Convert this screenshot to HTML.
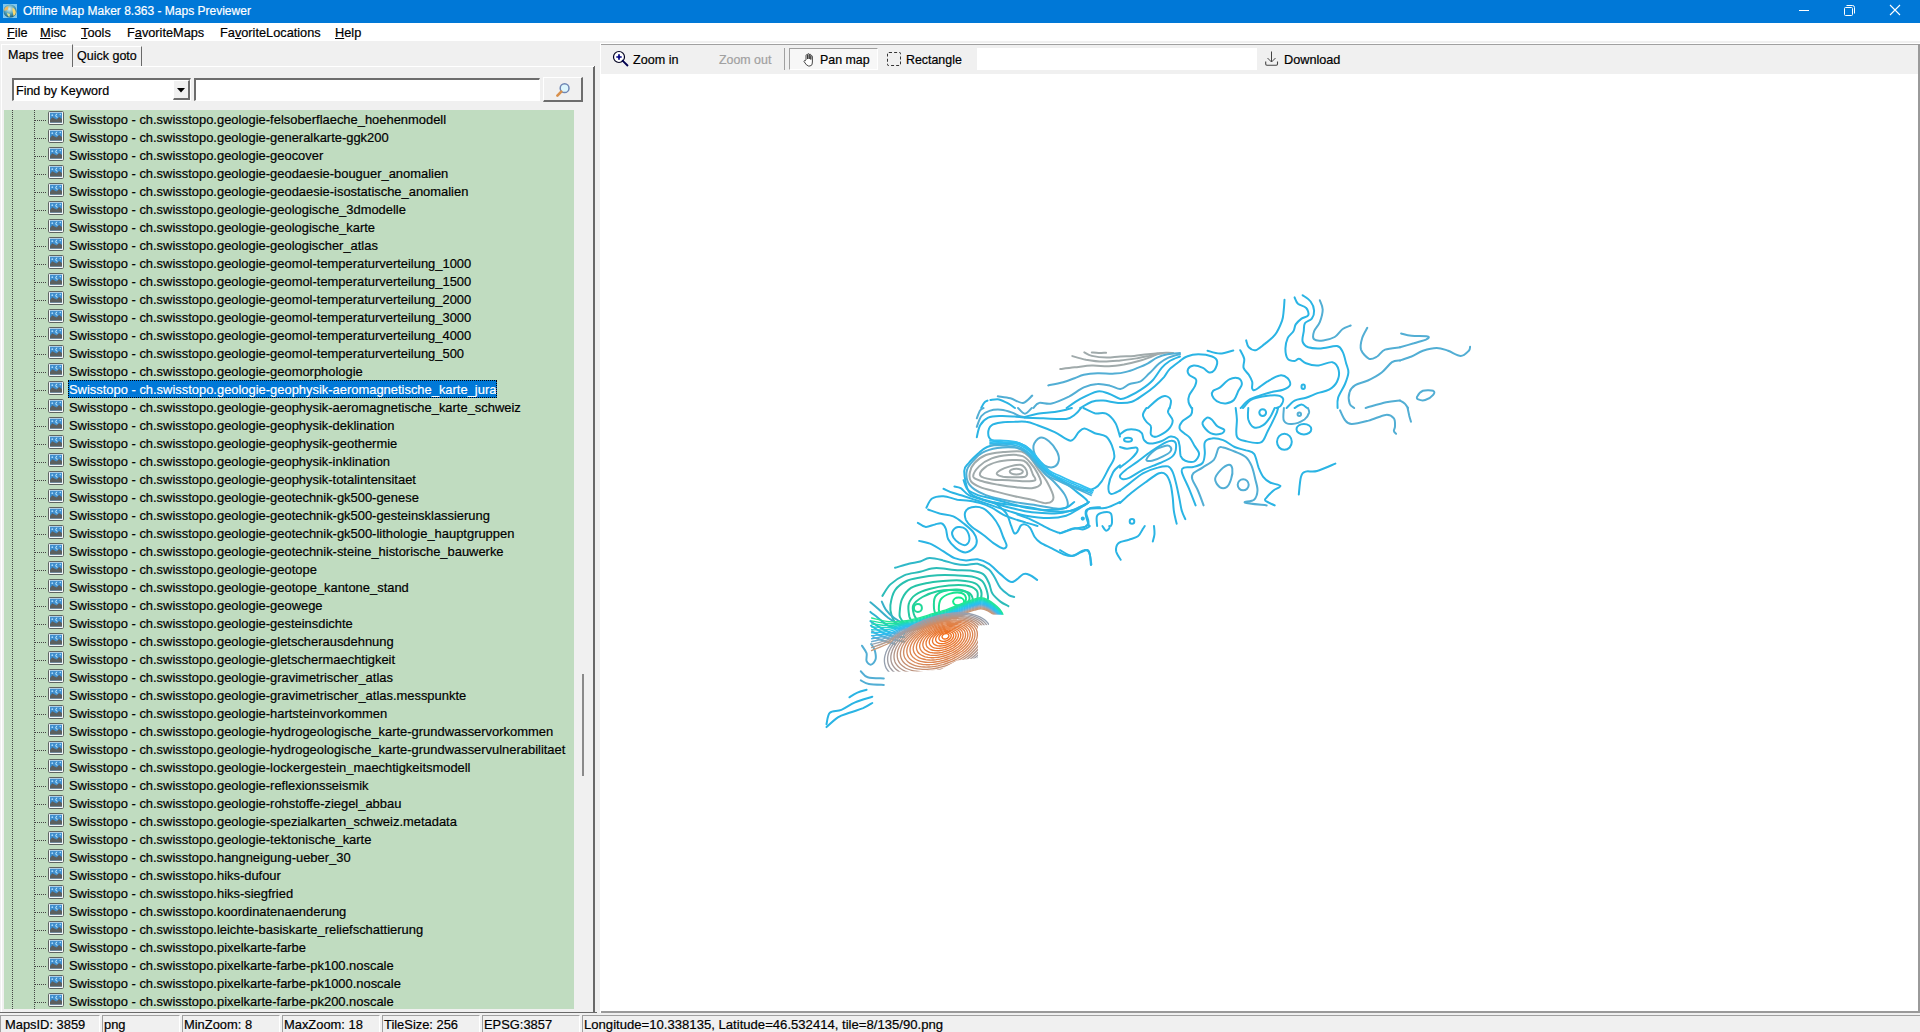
<!DOCTYPE html>
<html><head><meta charset="utf-8">
<style>
*{margin:0;padding:0;box-sizing:border-box}
html,body{width:1920px;height:1032px;overflow:hidden;background:#f0f0f0;font-family:"Liberation Sans",sans-serif;font-size:12px;color:#000;-webkit-text-stroke:0.2px currentColor}
.a{position:absolute}
#title{left:0;top:0;width:1920px;height:23px;background:#0078d7}
#title .t{left:23px;top:4px;color:#fff;font-size:12px;white-space:nowrap}
#menu{left:0;top:23px;width:1920px;height:18px;background:#fff}
#menu span{position:absolute;top:2px;font-size:12.75px;white-space:nowrap}
#menu u{text-decoration:underline;text-underline-offset:1px;text-decoration-thickness:1px}
.row{position:absolute;left:0;height:18px;width:574px}
.row .hd{position:absolute;left:35px;top:9px;width:12px;height:1px;background-image:linear-gradient(90deg,#444 50%,transparent 50%);background-size:2px 1px}
.row .ic{position:absolute;left:48px;top:0px}
.row .tx{position:absolute;left:68px;top:-1px;height:18px;line-height:20px;padding:0 1px;font-size:12.93px;white-space:nowrap}
.row.sel .tx{background:#0078d7;color:#fff;outline:1px dotted #000;outline-offset:-1px}
.sb span{position:absolute;font-size:12.9px;white-space:nowrap}
.tb{position:absolute;top:53px;font-size:12.4px;white-space:nowrap}
</style></head><body>
<svg width="0" height="0" style="position:absolute">
<defs>
<symbol id="img" viewBox="0 0 16 14">
<rect x="0.5" y="0.5" width="15" height="13" rx="1.2" fill="#f4f8f8" stroke="#5e6462"/>
<rect x="2" y="1.6" width="12" height="10" fill="#3f8dcc"/>
<path d="M2 9 L4.3 6.2 L8.5 8.4 L11.2 6 L14 8 L14 11.6 L2 11.6Z" fill="#5c5f5e"/>
<circle cx="4.3" cy="4.2" r="0.9" fill="#a8dcff"/><path d="M9.2 3 a1.6 1.6 0 1 0 0.4 3.2" stroke="#c8f0ff" stroke-width="1" fill="none"/><circle cx="12.3" cy="3.6" r="0.8" fill="#a8dcff"/>
</symbol>
</defs></svg>

<!-- title bar -->
<div id="title" class="a">
 <svg class="a" style="left:3px;top:4px" width="14" height="14" viewBox="0 0 14 14">
  <defs><radialGradient id="gl" cx="0.45" cy="0.35" r="0.7"><stop offset="0" stop-color="#e0f0e8"/><stop offset="0.5" stop-color="#5aa8c0"/><stop offset="1" stop-color="#10506a"/></radialGradient></defs>
  <rect x="0" y="0" width="14" height="14" fill="#80c8f0"/>
  <circle cx="7" cy="7" r="6.6" fill="url(#gl)"/>
  <path d="M1.2 5 Q2.5 2 5.5 2.2 L5 5.5 Q3.5 6.2 1.5 7Z" fill="#f0b860"/>
  <path d="M9.5 3.5 Q13 5 12.8 9 Q12 12 10.5 12 L9.8 8.5 Q9.2 6 9.5 3.5Z" fill="#f8d870"/>
  <path d="M4 9 L7 10 L6.5 13 Q4.5 12.5 4 9Z" fill="#e0e090"/>
 </svg>
 <span class="a t">Offline Map Maker 8.363 - Maps Previewer</span>
 <div class="a" style="left:1799px;top:10px;width:10px;height:1px;background:#fff"></div>
 <svg class="a" style="left:1843px;top:4px" width="13" height="13" viewBox="0 0 13 13"><rect x="1.5" y="3.5" width="8" height="8" rx="1" fill="none" stroke="#fff"/><path d="M3.5 1.5 H9.5 a2 2 0 0 1 2 2 V9.5" fill="none" stroke="#fff"/></svg>
 <svg class="a" style="left:1889px;top:4px" width="12" height="12" viewBox="0 0 12 12"><path d="M1 1 L11 11 M11 1 L1 11" stroke="#fff" stroke-width="1.1"/></svg>
</div>

<!-- menu -->
<div id="menu" class="a">
 <span style="left:7px"><u>F</u>ile</span>
 <span style="left:40px"><u>M</u>isc</span>
 <span style="left:81px"><u>T</u>ools</span>
 <span style="left:127px">F<u>a</u>voriteMaps</span>
 <span style="left:220px">Fa<u>v</u>oriteLocations</span>
 <span style="left:335px"><u>H</u>elp</span>
</div>

<!-- left panel -->
<div class="a" style="left:0;top:41px;width:600px;height:971px;background:#f0f0f0"></div>
<!-- tabs -->
<div class="a" style="left:1px;top:44px;width:72px;height:23px;border-top:1px solid #fff;border-left:1px solid #fff;border-right:1px solid #696969;background:#f0f0f0"></div>
<span class="a" style="left:8px;top:48px;font-size:12.5px">Maps tree</span>
<div class="a" style="left:74px;top:46px;width:68px;height:20px;border-top:1px solid #fff;border-right:1px solid #696969;background:#f0f0f0"></div>
<span class="a" style="left:77px;top:49px;font-size:12.5px">Quick goto</span>
<!-- tab page -->
<div class="a" style="left:1px;top:66px;width:594px;height:947px;border-left:1px solid #fff;border-right:2px solid #696969;border-bottom:1px solid #696969"></div>
<div class="a" style="left:73px;top:66px;width:521px;height:1px;background:#fff"></div>

<!-- combo -->
<div class="a" style="left:12px;top:78px;width:179px;height:23px;background:#fff;border-top:2px solid #6d6d6d;border-left:2px solid #6d6d6d;border-bottom:1px solid #fff;border-right:1px solid #fff"></div>
<span class="a" style="left:16px;top:84px;font-size:12.5px">Find by Keyword</span>
<div class="a" style="left:173px;top:80px;width:17px;height:20px;background:#f0f0f0;border-top:1px solid #fff;border-left:1px solid #fff;border-right:2px solid #6d6d6d;border-bottom:2px solid #6d6d6d"></div>
<svg class="a" style="left:177px;top:88px" width="8" height="5"><path d="M0 0 H8 L4 4.5Z" fill="#000"/></svg>
<!-- search input -->
<div class="a" style="left:194px;top:78px;width:346px;height:23px;background:#fff;border-top:2px solid #6d6d6d;border-left:2px solid #6d6d6d;border-bottom:1px solid #fff;border-right:1px solid #fff"></div>
<!-- search btn -->
<div class="a" style="left:543px;top:77px;width:40px;height:25px;background:#f0f0f0;border-top:1px solid #fff;border-left:1px solid #fff;border-right:2px solid #6d6d6d;border-bottom:2px solid #6d6d6d"></div>
<svg class="a" style="left:554px;top:81px" width="18" height="17" viewBox="0 0 18 17"><circle cx="10.6" cy="7.2" r="4.4" fill="#dcf6fd" stroke="#6f86b4" stroke-width="1.5"/><path d="M7.3 10.6 L3.4 14.6" stroke="#d8904c" stroke-width="2.7" stroke-linecap="round"/></svg>

<!-- tree -->
<div class="a" style="left:4px;top:110px;width:570px;height:899px;background:#c0dcc0;overflow:hidden">
 <div class="a" style="left:0;top:0;width:570px;height:899px">
 <div class="a" style="left:8px;top:0;width:1px;height:899px;background-image:linear-gradient(180deg,#444 50%,transparent 50%);background-size:1px 2px"></div>
 <div class="a" style="left:30px;top:0;width:1px;height:899px;background-image:linear-gradient(180deg,#444 50%,transparent 50%);background-size:1px 2px"></div>
 </div>
 <div class="a" style="left:-4px;top:-110px;width:574px;height:1009px">
<div class="row" style="top:111px"><i class="hd"></i><svg class="ic" width="16" height="14"><use href="#img"/></svg><span class="tx">Swisstopo - ch.swisstopo.geologie-felsoberflaeche_hoehenmodell</span></div>
<div class="row" style="top:129px"><i class="hd"></i><svg class="ic" width="16" height="14"><use href="#img"/></svg><span class="tx">Swisstopo - ch.swisstopo.geologie-generalkarte-ggk200</span></div>
<div class="row" style="top:147px"><i class="hd"></i><svg class="ic" width="16" height="14"><use href="#img"/></svg><span class="tx">Swisstopo - ch.swisstopo.geologie-geocover</span></div>
<div class="row" style="top:165px"><i class="hd"></i><svg class="ic" width="16" height="14"><use href="#img"/></svg><span class="tx">Swisstopo - ch.swisstopo.geologie-geodaesie-bouguer_anomalien</span></div>
<div class="row" style="top:183px"><i class="hd"></i><svg class="ic" width="16" height="14"><use href="#img"/></svg><span class="tx">Swisstopo - ch.swisstopo.geologie-geodaesie-isostatische_anomalien</span></div>
<div class="row" style="top:201px"><i class="hd"></i><svg class="ic" width="16" height="14"><use href="#img"/></svg><span class="tx">Swisstopo - ch.swisstopo.geologie-geologische_3dmodelle</span></div>
<div class="row" style="top:219px"><i class="hd"></i><svg class="ic" width="16" height="14"><use href="#img"/></svg><span class="tx">Swisstopo - ch.swisstopo.geologie-geologische_karte</span></div>
<div class="row" style="top:237px"><i class="hd"></i><svg class="ic" width="16" height="14"><use href="#img"/></svg><span class="tx">Swisstopo - ch.swisstopo.geologie-geologischer_atlas</span></div>
<div class="row" style="top:255px"><i class="hd"></i><svg class="ic" width="16" height="14"><use href="#img"/></svg><span class="tx">Swisstopo - ch.swisstopo.geologie-geomol-temperaturverteilung_1000</span></div>
<div class="row" style="top:273px"><i class="hd"></i><svg class="ic" width="16" height="14"><use href="#img"/></svg><span class="tx">Swisstopo - ch.swisstopo.geologie-geomol-temperaturverteilung_1500</span></div>
<div class="row" style="top:291px"><i class="hd"></i><svg class="ic" width="16" height="14"><use href="#img"/></svg><span class="tx">Swisstopo - ch.swisstopo.geologie-geomol-temperaturverteilung_2000</span></div>
<div class="row" style="top:309px"><i class="hd"></i><svg class="ic" width="16" height="14"><use href="#img"/></svg><span class="tx">Swisstopo - ch.swisstopo.geologie-geomol-temperaturverteilung_3000</span></div>
<div class="row" style="top:327px"><i class="hd"></i><svg class="ic" width="16" height="14"><use href="#img"/></svg><span class="tx">Swisstopo - ch.swisstopo.geologie-geomol-temperaturverteilung_4000</span></div>
<div class="row" style="top:345px"><i class="hd"></i><svg class="ic" width="16" height="14"><use href="#img"/></svg><span class="tx">Swisstopo - ch.swisstopo.geologie-geomol-temperaturverteilung_500</span></div>
<div class="row" style="top:363px"><i class="hd"></i><svg class="ic" width="16" height="14"><use href="#img"/></svg><span class="tx">Swisstopo - ch.swisstopo.geologie-geomorphologie</span></div>
<div class="row sel" style="top:381px"><i class="hd"></i><svg class="ic" width="16" height="14"><use href="#img"/></svg><span class="tx">Swisstopo - ch.swisstopo.geologie-geophysik-aeromagnetische_karte_jura</span></div>
<div class="row" style="top:399px"><i class="hd"></i><svg class="ic" width="16" height="14"><use href="#img"/></svg><span class="tx">Swisstopo - ch.swisstopo.geologie-geophysik-aeromagnetische_karte_schweiz</span></div>
<div class="row" style="top:417px"><i class="hd"></i><svg class="ic" width="16" height="14"><use href="#img"/></svg><span class="tx">Swisstopo - ch.swisstopo.geologie-geophysik-deklination</span></div>
<div class="row" style="top:435px"><i class="hd"></i><svg class="ic" width="16" height="14"><use href="#img"/></svg><span class="tx">Swisstopo - ch.swisstopo.geologie-geophysik-geothermie</span></div>
<div class="row" style="top:453px"><i class="hd"></i><svg class="ic" width="16" height="14"><use href="#img"/></svg><span class="tx">Swisstopo - ch.swisstopo.geologie-geophysik-inklination</span></div>
<div class="row" style="top:471px"><i class="hd"></i><svg class="ic" width="16" height="14"><use href="#img"/></svg><span class="tx">Swisstopo - ch.swisstopo.geologie-geophysik-totalintensitaet</span></div>
<div class="row" style="top:489px"><i class="hd"></i><svg class="ic" width="16" height="14"><use href="#img"/></svg><span class="tx">Swisstopo - ch.swisstopo.geologie-geotechnik-gk500-genese</span></div>
<div class="row" style="top:507px"><i class="hd"></i><svg class="ic" width="16" height="14"><use href="#img"/></svg><span class="tx">Swisstopo - ch.swisstopo.geologie-geotechnik-gk500-gesteinsklassierung</span></div>
<div class="row" style="top:525px"><i class="hd"></i><svg class="ic" width="16" height="14"><use href="#img"/></svg><span class="tx">Swisstopo - ch.swisstopo.geologie-geotechnik-gk500-lithologie_hauptgruppen</span></div>
<div class="row" style="top:543px"><i class="hd"></i><svg class="ic" width="16" height="14"><use href="#img"/></svg><span class="tx">Swisstopo - ch.swisstopo.geologie-geotechnik-steine_historische_bauwerke</span></div>
<div class="row" style="top:561px"><i class="hd"></i><svg class="ic" width="16" height="14"><use href="#img"/></svg><span class="tx">Swisstopo - ch.swisstopo.geologie-geotope</span></div>
<div class="row" style="top:579px"><i class="hd"></i><svg class="ic" width="16" height="14"><use href="#img"/></svg><span class="tx">Swisstopo - ch.swisstopo.geologie-geotope_kantone_stand</span></div>
<div class="row" style="top:597px"><i class="hd"></i><svg class="ic" width="16" height="14"><use href="#img"/></svg><span class="tx">Swisstopo - ch.swisstopo.geologie-geowege</span></div>
<div class="row" style="top:615px"><i class="hd"></i><svg class="ic" width="16" height="14"><use href="#img"/></svg><span class="tx">Swisstopo - ch.swisstopo.geologie-gesteinsdichte</span></div>
<div class="row" style="top:633px"><i class="hd"></i><svg class="ic" width="16" height="14"><use href="#img"/></svg><span class="tx">Swisstopo - ch.swisstopo.geologie-gletscherausdehnung</span></div>
<div class="row" style="top:651px"><i class="hd"></i><svg class="ic" width="16" height="14"><use href="#img"/></svg><span class="tx">Swisstopo - ch.swisstopo.geologie-gletschermaechtigkeit</span></div>
<div class="row" style="top:669px"><i class="hd"></i><svg class="ic" width="16" height="14"><use href="#img"/></svg><span class="tx">Swisstopo - ch.swisstopo.geologie-gravimetrischer_atlas</span></div>
<div class="row" style="top:687px"><i class="hd"></i><svg class="ic" width="16" height="14"><use href="#img"/></svg><span class="tx">Swisstopo - ch.swisstopo.geologie-gravimetrischer_atlas.messpunkte</span></div>
<div class="row" style="top:705px"><i class="hd"></i><svg class="ic" width="16" height="14"><use href="#img"/></svg><span class="tx">Swisstopo - ch.swisstopo.geologie-hartsteinvorkommen</span></div>
<div class="row" style="top:723px"><i class="hd"></i><svg class="ic" width="16" height="14"><use href="#img"/></svg><span class="tx">Swisstopo - ch.swisstopo.geologie-hydrogeologische_karte-grundwasservorkommen</span></div>
<div class="row" style="top:741px"><i class="hd"></i><svg class="ic" width="16" height="14"><use href="#img"/></svg><span class="tx">Swisstopo - ch.swisstopo.geologie-hydrogeologische_karte-grundwasservulnerabilitaet</span></div>
<div class="row" style="top:759px"><i class="hd"></i><svg class="ic" width="16" height="14"><use href="#img"/></svg><span class="tx">Swisstopo - ch.swisstopo.geologie-lockergestein_maechtigkeitsmodell</span></div>
<div class="row" style="top:777px"><i class="hd"></i><svg class="ic" width="16" height="14"><use href="#img"/></svg><span class="tx">Swisstopo - ch.swisstopo.geologie-reflexionsseismik</span></div>
<div class="row" style="top:795px"><i class="hd"></i><svg class="ic" width="16" height="14"><use href="#img"/></svg><span class="tx">Swisstopo - ch.swisstopo.geologie-rohstoffe-ziegel_abbau</span></div>
<div class="row" style="top:813px"><i class="hd"></i><svg class="ic" width="16" height="14"><use href="#img"/></svg><span class="tx">Swisstopo - ch.swisstopo.geologie-spezialkarten_schweiz.metadata</span></div>
<div class="row" style="top:831px"><i class="hd"></i><svg class="ic" width="16" height="14"><use href="#img"/></svg><span class="tx">Swisstopo - ch.swisstopo.geologie-tektonische_karte</span></div>
<div class="row" style="top:849px"><i class="hd"></i><svg class="ic" width="16" height="14"><use href="#img"/></svg><span class="tx">Swisstopo - ch.swisstopo.hangneigung-ueber_30</span></div>
<div class="row" style="top:867px"><i class="hd"></i><svg class="ic" width="16" height="14"><use href="#img"/></svg><span class="tx">Swisstopo - ch.swisstopo.hiks-dufour</span></div>
<div class="row" style="top:885px"><i class="hd"></i><svg class="ic" width="16" height="14"><use href="#img"/></svg><span class="tx">Swisstopo - ch.swisstopo.hiks-siegfried</span></div>
<div class="row" style="top:903px"><i class="hd"></i><svg class="ic" width="16" height="14"><use href="#img"/></svg><span class="tx">Swisstopo - ch.swisstopo.koordinatenaenderung</span></div>
<div class="row" style="top:921px"><i class="hd"></i><svg class="ic" width="16" height="14"><use href="#img"/></svg><span class="tx">Swisstopo - ch.swisstopo.leichte-basiskarte_reliefschattierung</span></div>
<div class="row" style="top:939px"><i class="hd"></i><svg class="ic" width="16" height="14"><use href="#img"/></svg><span class="tx">Swisstopo - ch.swisstopo.pixelkarte-farbe</span></div>
<div class="row" style="top:957px"><i class="hd"></i><svg class="ic" width="16" height="14"><use href="#img"/></svg><span class="tx">Swisstopo - ch.swisstopo.pixelkarte-farbe-pk100.noscale</span></div>
<div class="row" style="top:975px"><i class="hd"></i><svg class="ic" width="16" height="14"><use href="#img"/></svg><span class="tx">Swisstopo - ch.swisstopo.pixelkarte-farbe-pk1000.noscale</span></div>
<div class="row" style="top:993px"><i class="hd"></i><svg class="ic" width="16" height="14"><use href="#img"/></svg><span class="tx">Swisstopo - ch.swisstopo.pixelkarte-farbe-pk200.noscale</span></div>
 </div>
</div>
<!-- scrollbar thumb -->
<div class="a" style="left:582px;top:674px;width:2px;height:102px;background:#8a8a8a"></div>

<!-- right panel -->
<div class="a" style="left:601px;top:44px;width:1319px;height:1px;background:#a0a0a0"></div>
<div class="a" style="left:600px;top:43px;width:1px;height:970px;background:#fff"></div>
<div class="a" style="left:600px;top:43px;width:1320px;height:1px;background:#fff"></div>
<div class="a" style="left:601px;top:45px;width:1319px;height:29px;background:#f0f0f0"></div>
<div class="a" style="left:601px;top:74px;width:1317px;height:938px;background:#fff"></div>
<div class="a" style="left:1918px;top:44px;width:2px;height:969px;background:#9a9a9a"></div>
<div class="a" style="left:601px;top:1011px;width:1319px;height:2px;background:#9a9a9a"></div>

<!-- toolbar -->
<svg class="a" style="left:612px;top:50px" width="18" height="18" viewBox="0 0 18 18"><circle cx="7" cy="7" r="5.5" fill="#fff" stroke="#000020" stroke-width="1.2"/><path d="M4.3 7 H9.7 M7 4.3 V9.7" stroke="#000080" stroke-width="1.7"/><path d="M10.8 10.8 L15.3 15.3" stroke="#000050" stroke-width="1.9" stroke-linecap="square"/></svg>
<span class="tb" style="left:633px;font-size:12.6px">Zoom in</span>
<span class="tb" style="left:719px;color:#a0a0a0">Zoom out</span>
<div class="a" style="left:784px;top:48px;width:1px;height:22px;background:#a0a0a0"></div>
<div class="a" style="left:789px;top:48px;width:89px;height:22px;background:#f7f7f7;border-top:1px solid #a0a0a0;border-left:1px solid #a0a0a0;border-right:1px solid #fff;border-bottom:1px solid #fff"></div>
<svg class="a" style="left:803px;top:53px" width="12" height="14" viewBox="0 0 12 14"><path d="M3 7 V2.5 a0.8 0.8 0 0 1 1.6 0 V6 V1.5 a0.8 0.8 0 0 1 1.6 0 V6 V2 a0.8 0.8 0 0 1 1.6 0 V6.5 V3.5 a0.8 0.8 0 0 1 1.6 0 V9 Q9.8 12.5 7 13 H5.5 Q3.5 12.8 1 8.5 a0.8 0.8 0 0 1 1.3 -0.8Z" fill="#fff" stroke="#333" stroke-width="0.9"/></svg>
<span class="tb" style="left:820px">Pan map</span>
<div class="a" style="left:887px;top:52px;width:14px;height:14px;border:1px dashed #333;border-radius:2px"></div>
<span class="tb" style="left:906px">Rectangle</span>
<div class="a" style="left:977px;top:48px;width:280px;height:22px;background:#fff"></div>
<svg class="a" style="left:1265px;top:51px" width="14" height="15" viewBox="0 0 14 15"><path d="M6.5 0.5 V11 M2.5 7 L6.5 11 L10.5 7" fill="none" stroke="#444" stroke-width="1"/><path d="M0.7 10.5 V13 a1.2 1.2 0 0 0 1.2 1.2 H11.3 a1.2 1.2 0 0 0 1.2 -1.2 V10.5" fill="none" stroke="#444" stroke-width="1.1"/></svg>
<span class="tb" style="left:1284px;font-size:12.7px">Download</span>

<!-- map -->
<div class="a" style="left:601px;top:74px;width:1317px;height:937px;overflow:hidden">
<svg class="a" style="left:-601px;top:-74px" width="1920" height="1032" viewBox="0 0 1920 1032"><g fill="none" stroke-width="2" stroke-linecap="round" stroke-linejoin="round"><path d="M1091.8 352.4 C1092.9 352.5 1096.3 353.0 1098.6 353.0 C1101.0 353.1 1104.9 352.7 1106.1 352.7" stroke="#a0aaab"/>
<path d="M1084.3 352.4 C1085.6 353.0 1088.0 355.0 1091.8 355.9 C1095.5 356.7 1101.9 357.5 1106.7 357.6 C1111.4 357.7 1115.8 356.7 1120.4 356.5 C1125.0 356.2 1129.6 356.3 1134.2 355.9 C1138.8 355.5 1142.6 354.7 1147.9 354.2 C1153.3 353.7 1162.0 353.0 1166.2 352.8 C1170.5 352.6 1172.0 353.0 1173.1 353.0" stroke="#a0aaab"/>
<path d="M1072.3 356.1 C1074.6 356.7 1080.9 358.7 1086.0 359.7 C1091.2 360.6 1097.5 361.5 1103.2 361.6 C1109.0 361.7 1114.7 361.0 1120.4 360.5 C1126.1 359.9 1132.8 358.9 1137.6 358.2 C1142.4 357.4 1145.8 356.6 1149.1 355.9 C1152.3 355.1 1155.7 354.0 1157.1 353.6" stroke="#a0aaab"/>
<path d="M1060.3 369.1 C1062.6 368.8 1069.3 367.9 1074.6 367.3 C1079.8 366.8 1086.0 365.8 1091.8 365.6 C1097.5 365.4 1103.6 366.4 1109.0 366.2 C1114.3 366.0 1118.9 365.3 1123.9 364.5 C1128.8 363.6 1134.5 362.2 1138.8 361.0 C1143.0 359.9 1146.2 358.7 1149.1 357.6 C1151.9 356.6 1153.8 355.4 1155.9 354.7 C1158.0 354.0 1160.7 353.6 1161.7 353.4" stroke="#a0aaab"/>
<path d="M1048.2 385.4 C1050.7 384.9 1058.7 383.4 1063.1 382.2 C1067.5 381.0 1071.1 379.5 1074.6 378.2 C1078.0 377.0 1079.9 375.6 1083.8 374.8 C1087.6 374.0 1092.3 373.5 1097.5 373.3 C1102.7 373.1 1109.9 373.9 1114.7 373.6 C1119.5 373.4 1122.3 372.9 1126.1 371.9 C1130.0 371.0 1134.0 369.3 1137.6 367.9 C1141.2 366.5 1144.7 365.1 1147.9 363.3 C1151.2 361.6 1153.8 359.1 1157.1 357.6 C1160.3 356.1 1163.6 354.9 1167.4 354.2 C1171.2 353.4 1177.9 353.2 1180.0 353.0" stroke="#52aed4"/>
<path d="M1033.3 408.0 C1034.3 407.2 1036.0 403.6 1039.1 402.9 C1042.1 402.1 1046.7 404.5 1051.7 403.4 C1056.6 402.4 1063.5 399.2 1068.9 396.6 C1074.2 393.9 1079.0 389.5 1083.8 387.4 C1088.5 385.3 1093.1 384.2 1097.5 384.0 C1101.9 383.7 1106.3 384.8 1110.1 385.7 C1113.9 386.5 1117.2 389.4 1120.4 389.1 C1123.7 388.8 1126.3 385.2 1129.6 384.0 C1132.8 382.7 1136.6 383.4 1139.9 381.7 C1143.1 379.9 1145.8 376.7 1149.1 373.6 C1152.3 370.6 1156.1 366.0 1159.4 363.3 C1162.6 360.7 1165.1 359.1 1168.5 357.6 C1172.0 356.1 1178.1 354.7 1180.0 354.2" stroke="#52aed4"/>
<path d="M1066.6 408.0 C1068.9 406.5 1075.2 401.6 1080.3 398.9 C1085.5 396.1 1092.7 392.3 1097.5 391.4 C1102.3 390.5 1105.1 392.5 1109.0 393.7 C1112.8 394.9 1117.0 398.5 1120.4 398.9 C1123.9 399.2 1126.1 397.5 1129.6 396.0 C1133.0 394.5 1137.2 392.3 1141.0 389.7 C1144.9 387.1 1149.1 384.1 1152.5 380.5 C1155.9 376.9 1158.8 371.2 1161.7 367.9 C1164.5 364.7 1166.6 363.0 1169.7 361.0 C1172.7 359.1 1178.3 357.2 1180.0 356.5" stroke="#2ab4e4"/>
<path d="M1080.3 408.0 C1082.2 407.0 1088.0 403.0 1091.8 401.7 C1095.6 400.5 1098.8 400.4 1103.2 400.6 C1107.6 400.8 1113.4 402.7 1118.1 402.9 C1122.9 403.1 1127.7 403.1 1131.9 401.7 C1136.1 400.4 1139.5 397.4 1143.3 394.8 C1147.2 392.3 1151.4 389.2 1154.8 386.2 C1158.2 383.3 1161.5 379.9 1164.0 377.1 C1166.4 374.2 1167.0 371.7 1169.7 369.1 C1172.4 366.4 1178.3 362.4 1180.0 361.0" stroke="#2ab4e4"/>
<path d="M1147.9 408.0 C1149.6 406.5 1155.4 400.9 1158.2 398.9 C1161.1 396.8 1163.0 395.8 1165.1 396.0 C1167.2 396.2 1170.1 398.0 1170.8 400.0 C1171.6 402.0 1169.9 406.7 1169.7 408.0" stroke="#2ab4e4"/>
<path d="M997.8 396.3 C999.9 396.7 1006.2 397.2 1010.4 398.3 C1014.6 399.4 1019.4 403.3 1023.0 402.9 C1026.6 402.4 1030.7 396.8 1032.2 395.6" stroke="#52aed4"/>
<path d="M981.2 408.0 C981.7 407.2 983.0 404.1 984.1 402.9 C985.1 401.6 986.9 401.0 987.5 400.6" stroke="#2ab4e4"/>
<path d="M990.4 400.0 C991.8 399.9 996.0 398.9 999.0 399.4 C1001.9 400.0 1005.5 402.0 1008.1 403.4 C1010.8 404.9 1013.9 407.3 1015.0 408.0" stroke="#2ab4e4"/>
<path d="M1180.0 361.0 C1181.1 360.3 1183.8 357.6 1186.9 356.5 C1189.9 355.3 1194.1 354.2 1198.3 354.2 C1202.5 354.2 1208.9 355.2 1212.1 356.5 C1215.2 357.7 1216.9 359.3 1217.2 361.6 C1217.6 363.9 1215.7 368.4 1214.4 370.2 C1213.0 372.0 1211.1 372.9 1209.2 372.5 C1207.3 372.1 1205.5 369.1 1202.9 367.9 C1200.3 366.8 1196.2 365.4 1193.8 365.6 C1191.3 365.8 1188.8 367.5 1188.0 369.1 C1187.3 370.6 1187.8 373.1 1189.2 374.8 C1190.5 376.5 1195.1 377.5 1196.0 379.4 C1197.0 381.3 1196.0 383.6 1194.9 386.2 C1193.8 388.9 1190.2 392.7 1189.2 395.4 C1188.1 398.1 1188.2 400.2 1188.6 402.3 C1189.0 404.4 1191.0 407.1 1191.5 408.0" stroke="#2ab4e4"/>
<path d="M1207.5 350.7 C1209.6 351.2 1215.8 353.7 1220.1 353.6 C1224.4 353.5 1231.1 350.9 1233.3 350.4" stroke="#2ab4e4"/>
<path d="M1246.2 340.4 C1246.6 341.6 1247.2 345.7 1248.8 347.3 C1250.3 348.9 1253.0 350.7 1255.6 350.2 C1258.3 349.6 1261.5 346.4 1264.8 343.9 C1268.0 341.3 1272.2 338.5 1275.1 334.7 C1278.0 330.9 1280.5 324.9 1282.0 320.9 C1283.4 316.9 1283.3 314.2 1283.7 310.6 C1284.1 307.1 1284.4 301.6 1284.5 299.7" stroke="#2ab4e4"/>
<path d="M1240.2 350.2 C1240.8 351.6 1243.6 355.8 1244.2 358.8 C1244.7 361.7 1242.8 365.2 1243.6 367.9 C1244.4 370.6 1247.3 372.5 1248.8 374.8 C1250.2 377.1 1251.6 379.4 1252.2 381.7 C1252.8 384.0 1251.6 387.2 1252.2 388.5 C1252.8 389.9 1253.1 390.8 1255.6 389.7 C1258.1 388.5 1263.1 384.1 1267.1 381.7 C1271.1 379.3 1276.2 375.9 1279.7 375.4 C1283.1 374.8 1286.0 376.6 1287.7 378.2 C1289.4 379.9 1290.8 383.2 1290.0 385.1 C1289.2 387.0 1286.2 388.5 1283.1 389.7 C1280.1 390.8 1275.5 391.0 1271.7 392.0 C1267.8 392.9 1264.0 394.1 1260.2 395.4 C1256.4 396.8 1252.0 397.9 1248.8 400.0 C1245.5 402.1 1242.1 406.7 1240.7 408.0" stroke="#2ab4e4"/>
<path d="M1294.6 297.4 C1295.2 298.5 1296.1 302.0 1298.0 303.8 C1299.9 305.5 1304.3 305.9 1306.0 307.8 C1307.8 309.7 1309.1 313.4 1308.3 315.2 C1307.6 317.0 1303.6 317.1 1301.5 318.6 C1299.4 320.2 1297.1 322.3 1295.7 324.4 C1294.4 326.5 1294.8 329.0 1293.4 331.2 C1292.1 333.5 1289.0 335.3 1287.7 338.1 C1286.4 341.0 1285.4 345.0 1285.4 348.4 C1285.4 351.9 1286.2 356.6 1287.7 358.8 C1289.2 360.9 1292.7 361.0 1294.6 361.0 C1296.5 361.0 1297.3 358.4 1299.2 358.8 C1301.1 359.1 1303.0 362.2 1306.0 363.3 C1309.1 364.5 1313.1 365.8 1317.5 365.6 C1321.9 365.4 1328.9 361.4 1332.4 362.2 C1335.9 363.0 1337.9 367.0 1338.7 370.2 C1339.5 373.5 1338.6 378.4 1337.0 381.7 C1335.4 384.9 1332.2 387.8 1329.0 389.7 C1325.7 391.6 1321.3 391.8 1317.5 393.1 C1313.7 394.5 1309.9 396.5 1306.0 397.7 C1302.2 398.9 1297.8 398.9 1294.6 400.6 C1291.3 402.3 1287.9 406.8 1286.6 408.0" stroke="#2ab4e4"/>
<path d="M1302.6 295.2 C1303.9 296.2 1308.7 298.9 1310.6 301.5 C1312.5 304.0 1313.9 307.8 1314.1 310.6 C1314.3 313.5 1313.3 316.5 1311.8 318.6 C1310.2 320.7 1306.2 321.1 1304.9 323.2 C1303.6 325.3 1304.1 328.2 1303.8 331.2 C1303.4 334.3 1301.8 338.9 1302.6 341.6 C1303.4 344.2 1305.3 346.1 1308.3 347.3 C1311.4 348.4 1316.2 348.6 1320.9 348.4 C1325.7 348.2 1333.4 345.6 1337.0 346.1 C1340.6 346.7 1341.2 349.0 1342.7 351.9 C1344.2 354.7 1345.2 359.9 1346.1 363.3 C1347.1 366.8 1348.6 369.1 1348.4 372.5 C1348.2 375.9 1346.7 379.8 1345.0 384.0 C1343.3 388.2 1339.4 393.7 1338.1 397.7 C1336.9 401.7 1337.6 406.3 1337.6 408.0" stroke="#2ab4e4"/>
<path d="M1319.8 300.3 C1320.3 301.8 1322.7 305.9 1322.7 309.5 C1322.7 313.1 1321.2 318.5 1319.8 322.1 C1318.4 325.7 1315.0 328.4 1314.1 331.2 C1313.1 334.1 1312.5 337.7 1314.1 339.3 C1315.6 340.8 1319.8 340.8 1323.2 340.4 C1326.7 340.0 1331.4 338.9 1334.7 337.0 C1337.9 335.1 1340.0 330.9 1342.7 329.0 C1345.4 327.0 1349.4 326.1 1350.7 325.5" stroke="#52aed4"/>
<path d="M1367.3 327.8 C1366.5 329.5 1363.2 334.5 1362.2 338.1 C1361.1 341.8 1359.9 346.1 1361.0 349.6 C1362.2 353.0 1366.4 357.6 1369.1 358.8 C1371.7 359.9 1374.4 358.0 1377.1 356.5 C1379.8 354.9 1381.3 351.1 1385.1 349.6 C1388.9 348.1 1397.5 347.7 1400.0 347.3" stroke="#52aed4"/>
<path d="M1400.0 360.5 C1398.7 360.8 1395.0 360.2 1392.0 362.2 C1388.9 364.2 1385.7 369.4 1381.7 372.5 C1377.7 375.6 1372.3 378.4 1367.9 380.5 C1363.5 382.6 1358.4 383.2 1355.3 385.1 C1352.3 387.0 1350.5 388.9 1349.6 392.0 C1348.6 395.0 1348.8 400.8 1349.6 403.4 C1350.3 406.1 1353.4 407.3 1354.2 408.0" stroke="#52aed4"/>
<path d="M1365.6 408.0 C1369.1 407.1 1380.5 403.5 1386.2 402.3 C1392.0 401.1 1397.7 400.9 1400.0 400.6" stroke="#52aed4"/>
<path d="M1213.2 390.8 C1214.6 389.5 1217.4 389.3 1220.1 387.4 C1222.8 385.5 1226.2 380.9 1229.3 379.4 C1232.3 377.8 1236.3 377.5 1238.4 378.2 C1240.5 379.0 1241.9 381.9 1241.9 384.0 C1241.9 386.1 1239.8 388.2 1238.4 390.8 C1237.1 393.5 1236.0 397.9 1233.9 400.0 C1231.8 402.1 1228.7 403.2 1225.8 403.4 C1223.0 403.6 1219.0 402.5 1216.7 401.1 C1214.4 399.8 1212.7 397.1 1212.1 395.4 C1211.5 393.7 1211.9 392.2 1213.2 390.8Z" stroke="#2ab4e4"/>
<ellipse cx="1303.2" cy="386.8" rx="1.7" ry="2.3" stroke="#2ab4e4"/>
<path d="M1243.0 408.0 C1244.4 406.7 1247.8 401.9 1251.0 400.0 C1254.3 398.1 1258.1 397.3 1262.5 396.6 C1266.9 395.8 1274.0 395.0 1277.4 395.4 C1280.8 395.8 1282.6 397.1 1283.1 398.9 C1283.7 400.6 1282.0 404.2 1280.8 405.7 C1279.7 407.3 1277.0 407.6 1276.2 408.0" stroke="#2ab4e4"/>
<path d="M1294.6 408.0 C1295.7 407.4 1299.4 404.6 1301.5 404.6 C1303.6 404.6 1306.2 407.4 1307.2 408.0" stroke="#2ab4e4"/>
<path d="M1401.1 333.5 C1402.9 333.9 1407.1 335.4 1411.5 335.8 C1415.9 336.3 1425.0 335.8 1427.5 336.4 C1430.0 337.0 1428.6 338.1 1426.4 339.3 C1424.1 340.4 1418.1 341.9 1413.8 343.3 C1409.4 344.6 1402.3 346.6 1400.0 347.3" stroke="#52aed4"/>
<path d="M1400.0 360.5 C1401.9 359.8 1407.6 358.1 1411.5 356.5 C1415.3 354.8 1418.7 352.2 1422.9 350.7 C1427.1 349.3 1432.5 347.9 1436.7 347.9 C1440.9 347.9 1444.1 349.4 1448.1 350.7 C1452.1 352.1 1457.3 355.9 1460.7 355.9 C1464.2 355.9 1467.2 352.3 1468.8 350.7 C1470.3 349.2 1469.9 347.4 1470.1 346.7" stroke="#52aed4"/>
<path d="M1417.2 396.6 C1418.0 395.1 1420.2 391.8 1422.9 390.8 C1425.6 389.9 1431.5 390.2 1433.2 390.8 C1434.9 391.5 1434.6 393.3 1433.2 394.8 C1431.9 396.4 1427.7 399.2 1425.2 400.0 C1422.7 400.8 1419.7 400.0 1418.3 399.4 C1417.0 398.9 1416.4 398.0 1417.2 396.6Z" stroke="#52aed4"/>
<path d="M1400.0 400.6 C1400.8 401.1 1403.2 402.2 1404.6 403.4 C1405.9 404.7 1407.4 407.3 1408.0 408.0" stroke="#52aed4"/>
<path d="M1146.4 408.0 C1145.8 409.1 1142.9 412.6 1142.9 414.9 C1142.9 417.2 1145.0 419.8 1146.4 421.8 C1147.7 423.7 1150.2 424.2 1150.9 426.3 C1151.7 428.4 1150.0 432.6 1150.9 434.4 C1151.9 436.1 1153.8 437.4 1156.7 436.6 C1159.5 435.9 1165.5 432.4 1168.1 429.8 C1170.8 427.1 1172.7 423.5 1172.7 420.6 C1172.7 417.7 1168.7 414.7 1168.1 412.6 C1167.6 410.5 1169.1 408.8 1169.3 408.0" stroke="#2ab4e4"/>
<path d="M1120.0 434.4 C1121.1 433.6 1124.2 430.5 1126.9 429.8 C1129.5 429.0 1133.6 429.2 1136.0 429.8 C1138.5 430.3 1140.4 431.5 1141.8 433.2 C1143.1 434.9 1142.7 438.4 1144.1 440.1 C1145.4 441.8 1146.9 443.3 1149.8 443.5 C1152.7 443.7 1157.8 442.4 1161.2 441.2 C1164.7 440.1 1167.7 437.0 1170.4 436.6 C1173.1 436.3 1175.8 437.4 1177.3 438.9 C1178.8 440.5 1179.0 442.9 1179.6 445.8 C1180.2 448.7 1179.8 453.6 1180.7 456.1 C1181.7 458.6 1183.0 459.8 1185.3 460.7 C1187.6 461.6 1192.2 462.4 1194.5 461.3 C1196.8 460.1 1199.1 456.4 1199.1 453.8 C1199.1 451.3 1196.0 448.5 1194.5 445.8 C1193.0 443.1 1191.6 439.9 1189.9 437.8 C1188.2 435.7 1185.9 434.7 1184.2 433.2 C1182.4 431.7 1180.0 430.5 1179.6 428.6 C1179.2 426.7 1180.0 424.0 1181.9 421.8 C1183.8 419.5 1189.3 417.2 1191.0 414.9 C1192.8 412.6 1192.0 409.1 1192.2 408.0" stroke="#2ab4e4"/>
<ellipse cx="1128.0" cy="439.8" rx="4.0" ry="2.0" stroke="#2ab4e4"/>
<path d="M1120.0 447.0 C1121.1 447.2 1124.2 448.6 1126.9 448.7 C1129.5 448.8 1134.3 447.1 1136.0 447.5 C1137.8 448.0 1138.0 449.7 1137.2 451.5 C1136.4 453.4 1133.6 456.3 1131.5 458.4 C1129.4 460.5 1126.5 462.6 1124.6 464.1 C1122.7 465.7 1120.8 467.0 1120.0 467.6" stroke="#2ab4e4"/>
<path d="M1146.4 459.6 C1146.7 457.8 1151.1 452.7 1154.4 450.4 C1157.6 448.1 1163.2 446.4 1165.8 445.8 C1168.5 445.2 1169.7 446.0 1170.4 447.0 C1171.2 447.9 1171.6 450.0 1170.4 451.5 C1169.3 453.1 1166.6 454.6 1163.5 456.1 C1160.5 457.7 1154.9 460.1 1152.1 460.7 C1149.2 461.3 1146.0 461.3 1146.4 459.6Z" stroke="#52aed4"/>
<path d="M1122.3 479.0 C1120.8 478.7 1119.4 477.1 1120.0 475.6 C1120.6 474.1 1122.9 472.2 1125.7 469.9 C1128.6 467.6 1133.0 464.9 1137.2 461.9 C1141.4 458.8 1146.2 454.8 1150.9 451.5 C1155.7 448.3 1162.0 444.1 1165.8 442.4 C1169.7 440.7 1172.1 440.5 1173.9 441.2 C1175.6 442.0 1176.3 444.5 1176.1 447.0 C1176.0 449.4 1175.4 453.5 1172.7 456.1 C1170.0 458.8 1165.1 460.7 1160.1 463.0 C1155.1 465.3 1148.1 467.4 1142.9 469.9 C1137.8 472.4 1132.6 476.4 1129.2 477.9 C1125.7 479.4 1123.8 479.4 1122.3 479.0Z" stroke="#2ab4e4"/>
<path d="M1120.0 490.5 C1121.5 489.4 1125.3 486.5 1129.2 483.6 C1133.0 480.8 1138.1 476.0 1142.9 473.3 C1147.7 470.6 1153.6 468.7 1157.8 467.6 C1162.0 466.4 1165.6 465.7 1168.1 466.4 C1170.6 467.2 1171.4 469.3 1172.7 472.2 C1174.0 475.0 1175.0 479.0 1176.1 483.6 C1177.3 488.2 1178.6 495.1 1179.6 499.7 C1180.5 504.2 1180.9 507.9 1181.9 511.1 C1182.8 514.4 1184.7 517.8 1185.3 519.1" stroke="#2ab4e4"/>
<path d="M1120.0 503.1 C1121.9 501.4 1127.3 496.2 1131.5 492.8 C1135.7 489.4 1140.6 485.7 1145.2 482.5 C1149.8 479.2 1155.5 474.6 1159.0 473.3 C1162.4 472.0 1163.9 472.7 1165.8 474.5 C1167.7 476.2 1169.3 479.8 1170.4 483.6 C1171.6 487.4 1172.1 492.8 1172.7 497.4 C1173.3 502.0 1173.2 506.7 1173.9 511.1 C1174.5 515.5 1176.2 521.6 1176.7 523.7" stroke="#2ab4e4"/>
<path d="M1202.5 424.0 C1201.9 421.5 1205.6 418.5 1207.1 417.7 C1208.6 417.0 1209.9 418.0 1211.7 419.5 C1213.4 420.9 1215.3 424.6 1217.4 426.3 C1219.5 428.1 1223.7 428.5 1224.3 429.8 C1224.8 431.0 1223.1 433.2 1220.8 433.8 C1218.5 434.4 1213.6 434.8 1210.5 433.2 C1207.5 431.6 1203.1 426.6 1202.5 424.0Z" stroke="#2ab4e4"/>
<path d="M1195.6 505.4 C1194.5 502.5 1191.0 493.7 1188.8 488.2 C1186.5 482.7 1182.6 475.6 1181.9 472.2 C1181.1 468.7 1182.3 468.4 1184.2 467.6 C1186.1 466.7 1190.3 467.8 1193.3 467.0 C1196.4 466.2 1200.6 465.2 1202.5 463.0 C1204.4 460.8 1204.4 457.3 1204.8 453.8 C1205.2 450.4 1203.6 445.0 1204.8 442.4 C1205.9 439.8 1208.6 438.7 1211.7 438.4 C1214.7 438.0 1219.3 438.7 1223.1 440.1 C1226.9 441.5 1230.8 445.2 1234.6 447.0 C1238.4 448.7 1242.8 449.2 1246.0 450.4 C1249.3 451.5 1252.0 451.0 1254.1 453.8 C1256.2 456.7 1257.1 463.8 1258.6 467.6 C1260.2 471.4 1261.3 474.3 1263.2 476.8 C1265.1 479.2 1267.2 481.0 1270.1 482.5 C1273.0 484.0 1279.8 484.6 1280.4 485.9 C1281.0 487.3 1275.8 488.6 1273.5 490.5 C1271.2 492.4 1268.0 495.7 1266.7 497.4 C1265.3 499.1 1264.2 499.5 1265.5 500.8 C1266.9 502.1 1273.2 504.6 1274.7 505.4" stroke="#2ab4e4"/>
<path d="M1203.6 505.4 C1202.7 502.9 1199.8 494.9 1197.9 490.5 C1196.0 486.1 1193.0 481.9 1192.2 479.0 C1191.4 476.2 1191.6 475.2 1193.3 473.3 C1195.1 471.4 1199.1 469.9 1202.5 467.6 C1205.9 465.3 1211.3 462.8 1214.0 459.6 C1216.6 456.3 1217.0 450.1 1218.5 448.1 C1220.1 446.1 1220.5 447.0 1223.1 447.5 C1225.8 448.1 1230.8 449.9 1234.6 451.5 C1238.4 453.2 1243.2 454.8 1246.0 457.3 C1248.9 459.8 1250.2 462.8 1251.8 466.4 C1253.3 470.1 1254.3 475.0 1255.2 479.0 C1256.2 483.1 1257.7 487.1 1257.5 490.5 C1257.3 493.9 1256.2 497.7 1254.1 499.7 C1252.0 501.7 1242.8 501.6 1244.9 502.5 C1247.0 503.5 1263.0 504.9 1266.7 505.4" stroke="#52aed4"/>
<path d="M1215.1 479.0 C1215.3 476.2 1218.5 472.3 1220.8 469.9 C1223.1 467.5 1226.9 464.9 1228.9 464.7 C1230.8 464.5 1231.9 466.3 1232.3 468.7 C1232.7 471.1 1232.1 476.0 1231.1 479.0 C1230.2 482.1 1228.5 485.7 1226.6 487.1 C1224.7 488.4 1221.6 488.4 1219.7 487.1 C1217.8 485.7 1214.9 481.9 1215.1 479.0Z" stroke="#52aed4"/>
<ellipse cx="1243.2" cy="484.8" rx="5.5" ry="5.5" stroke="#52aed4"/>
<path d="M1235.7 408.0 C1235.9 409.9 1236.7 414.7 1236.9 419.5 C1237.1 424.2 1235.3 433.0 1236.9 436.6 C1238.4 440.3 1242.0 440.3 1246.0 441.2 C1250.1 442.2 1257.3 444.1 1260.9 442.4 C1264.6 440.7 1265.3 435.5 1267.8 430.9 C1270.3 426.3 1274.1 418.7 1275.8 414.9 C1277.6 411.1 1277.7 409.1 1278.1 408.0" stroke="#2ab4e4"/>
<path d="M1248.3 408.0 C1248.3 409.9 1247.4 416.2 1248.3 419.5 C1249.3 422.7 1251.6 426.5 1254.1 427.5 C1256.5 428.4 1260.6 426.9 1263.2 425.2 C1265.9 423.5 1268.2 420.0 1270.1 417.2 C1272.0 414.3 1273.9 409.5 1274.7 408.0" stroke="#2ab4e4"/>
<ellipse cx="1262.7" cy="412.6" rx="3.4" ry="3.4" stroke="#2ab4e4"/>
<path d="M1283.9 408.0 C1283.9 410.1 1282.5 417.9 1283.9 420.6 C1285.2 423.3 1288.4 424.2 1291.9 424.0 C1295.3 423.9 1301.6 421.4 1304.5 419.5 C1307.3 417.5 1308.5 414.5 1309.1 412.6 C1309.6 410.7 1308.1 408.8 1307.9 408.0" stroke="#52aed4"/>
<ellipse cx="1299.3" cy="414.3" rx="1.7" ry="1.7" stroke="#52aed4"/>
<ellipse cx="1303.9" cy="429.2" rx="7.4" ry="5.2" stroke="#2ab4e4"/>
<ellipse cx="1284.4" cy="441.8" rx="7.4" ry="8.0" stroke="#2ab4e4"/>
<path d="M1298.8 494.5 C1299.1 491.6 1299.9 480.6 1301.0 476.8 C1302.2 472.9 1303.0 472.5 1305.6 471.6 C1308.3 470.6 1312.1 472.4 1317.1 471.0 C1322.0 469.7 1332.4 464.8 1335.4 463.6" stroke="#2ab4e4"/>
<ellipse cx="1132.0" cy="521.4" rx="2.3" ry="2.3" stroke="#2ab4e4"/>
<path d="M1340.0 410.3 C1340.8 411.8 1342.7 417.2 1344.6 419.5 C1346.5 421.8 1347.4 423.9 1351.5 424.0 C1355.5 424.2 1362.9 422.1 1368.6 420.6 C1374.4 419.1 1381.6 415.3 1385.8 414.9 C1390.0 414.5 1392.3 416.4 1393.9 418.3 C1395.4 420.2 1395.0 424.2 1395.0 426.3 C1395.0 428.4 1393.7 429.7 1393.9 430.9 C1394.0 432.2 1395.8 433.3 1396.1 433.8" stroke="#52aed4"/>
<path d="M1407.6 408.0 C1407.9 409.3 1408.8 413.7 1409.3 416.0 C1409.9 418.3 1410.8 420.8 1411.0 421.8" stroke="#52aed4"/>
<path d="M1060.0 533.4 C1061.1 533.0 1064.4 531.4 1066.9 530.6 C1069.4 529.7 1072.2 528.5 1074.9 528.3 C1077.6 528.1 1080.6 529.6 1082.9 529.4 C1085.2 529.2 1087.5 527.7 1088.6 527.1 C1089.8 526.6 1089.6 526.2 1089.8 526.0" stroke="#2ab4e4"/>
<path d="M1102.4 526.0 C1103.0 526.8 1104.7 530.2 1105.8 530.6 C1107.0 531.0 1108.7 529.1 1109.3 528.3 C1109.8 527.5 1109.3 526.4 1109.3 526.0" stroke="#2ab4e4"/>
<path d="M1060.0 550.1 C1061.9 551.0 1068.0 555.4 1071.5 555.8 C1074.9 556.2 1078.0 553.3 1080.6 552.4 C1083.3 551.4 1086.0 549.7 1087.5 550.1 C1089.0 550.4 1089.2 552.2 1089.8 554.6 C1090.4 557.1 1090.7 563.2 1090.9 565.0" stroke="#2ab4e4"/>
<path d="M1120.7 559.8 C1120.0 558.4 1116.5 554.0 1116.1 551.2 C1115.8 548.4 1116.3 545.1 1118.4 543.2 C1120.5 541.3 1125.5 540.9 1128.8 539.8 C1132.0 538.6 1135.6 538.0 1137.9 536.3 C1140.2 534.6 1141.4 531.2 1142.5 529.4 C1143.6 527.7 1144.4 526.6 1144.8 526.0" stroke="#2ab4e4"/>
<path d="M1154.0 526.0 C1154.1 527.3 1154.7 531.4 1154.5 534.0 C1154.3 536.6 1153.1 540.2 1152.8 541.5" stroke="#2ab4e4"/>
<path d="M862.0 645.7 C862.7 647.0 865.8 650.6 866.6 653.2 C867.3 655.7 865.8 659.3 866.6 661.2 C867.3 663.1 869.6 665.0 871.1 664.6 C872.7 664.2 875.2 661.4 875.7 658.9 C876.3 656.4 875.3 652.2 874.6 649.7 C873.8 647.2 871.7 645.0 871.1 644.0" stroke="#52aed4"/>
<path d="M860.8 671.2 C862.0 672.2 863.9 676.0 867.7 677.2 C871.5 678.4 881.1 678.2 883.8 678.4" stroke="#52aed4"/>
<path d="M860.8 680.4 C862.2 681.0 865.0 683.4 868.9 684.1 C872.7 684.8 881.3 684.8 883.8 684.9" stroke="#52aed4"/>
<path d="M849.4 697.3 C850.7 696.5 854.5 693.9 857.4 692.7 C860.3 691.5 865.0 690.3 866.6 689.8" stroke="#2ab4e4"/>
<path d="M826.5 724.2 C827.0 722.3 827.4 715.1 829.9 712.8 C832.4 710.4 837.2 711.6 841.4 709.9 C845.6 708.2 849.9 704.6 855.1 702.4 C860.3 700.2 869.4 697.7 872.3 696.7" stroke="#2ab4e4"/>
<path d="M826.5 727.1 C828.4 725.4 834.1 719.7 837.9 717.3 C841.7 714.9 845.2 714.3 849.4 712.8 C853.6 711.2 859.3 709.8 863.1 708.2 C866.9 706.5 870.8 703.9 872.3 703.0" stroke="#2ab4e4"/>
<path d="M952.3 531.7 C953.1 530.0 955.7 527.5 958.0 527.1 C960.3 526.8 964.1 527.5 966.0 529.4 C968.0 531.3 969.5 536.0 969.5 538.6 C969.5 541.2 967.8 544.1 966.0 544.9 C964.3 545.7 961.3 544.4 959.2 543.2 C957.1 541.9 954.6 539.4 953.4 537.5 C952.3 535.5 951.5 533.4 952.3 531.7Z" stroke="#2ab4e4"/>
<path d="M919.1 540.9 C921.2 541.5 927.7 542.6 931.7 544.3 C935.7 546.1 939.3 548.9 943.1 551.2 C946.9 553.5 950.8 556.6 954.6 558.1 C958.4 559.6 962.2 560.2 966.0 560.4 C969.9 560.6 973.7 558.7 977.5 559.2 C981.3 559.8 985.1 561.3 989.0 563.8 C992.8 566.3 996.6 571.1 1000.4 574.1 C1004.2 577.2 1008.1 582.1 1011.9 582.1 C1015.7 582.1 1020.3 575.3 1023.3 574.1 C1026.4 573.0 1027.9 574.3 1030.2 575.3 C1032.5 576.2 1035.9 579.1 1037.1 579.9" stroke="#2ab4e4"/>
<path d="M895.0 567.8 C897.3 567.2 904.5 564.9 908.8 563.8 C913.0 562.8 916.8 562.5 920.2 561.5 C923.6 560.6 925.6 558.3 929.4 558.1 C933.2 557.9 938.9 559.4 943.1 560.4 C947.3 561.3 950.8 563.0 954.6 563.8 C958.4 564.6 962.2 565.0 966.0 565.0 C969.9 565.0 973.7 563.0 977.5 563.8 C981.3 564.6 986.1 567.2 989.0 569.5 C991.8 571.8 992.8 574.5 994.7 577.6 C996.6 580.6 998.1 585.0 1000.4 587.9 C1002.7 590.7 1006.1 593.2 1008.4 594.8 C1010.7 596.3 1013.2 596.7 1014.2 597.0" stroke="#2fb8c8"/>
<path d="M882.4 595.9 C883.7 594.0 886.8 587.9 890.4 584.4 C894.0 581.0 899.2 577.4 904.2 575.3 C909.1 573.2 915.6 573.0 920.2 571.8 C924.8 570.7 927.8 569.0 931.7 568.4 C935.5 567.8 939.3 568.1 943.1 568.4 C946.9 568.7 949.8 569.7 954.6 570.1 C959.4 570.5 967.0 570.0 971.8 570.7 C976.5 571.4 980.4 572.0 983.2 574.1 C986.1 576.2 987.4 580.0 989.0 583.3 C990.5 586.5 990.5 590.5 992.4 593.6 C994.3 596.7 997.7 599.5 1000.4 601.6 C1003.1 603.7 1007.1 605.4 1008.4 606.2" stroke="#2cbcb8"/>
<path d="M896.1 624.5 C895.4 623.0 892.5 618.6 891.6 615.4 C890.6 612.1 889.8 609.3 890.4 605.1 C891.0 600.9 892.3 594.2 895.0 590.2 C897.7 586.2 902.3 583.1 906.5 581.0 C910.7 578.9 915.1 578.5 920.2 577.6 C925.4 576.6 931.7 575.7 937.4 575.3 C943.1 574.9 948.9 575.1 954.6 575.3 C960.3 575.5 967.2 575.5 971.8 576.4 C976.4 577.4 979.6 578.7 982.1 581.0 C984.6 583.3 985.7 587.1 986.7 590.2 C987.6 593.2 988.4 596.9 987.8 599.3 C987.2 601.8 984.0 604.1 983.2 605.1" stroke="#28c0b0"/>
<path d="M904.2 623.4 C903.5 622.4 900.9 619.4 900.2 617.7 C899.4 615.9 899.3 616.1 899.6 613.1 C899.9 610.0 900.0 603.5 901.9 599.3 C903.8 595.1 907.0 590.5 911.0 587.9 C915.1 585.2 920.6 584.4 925.9 583.3 C931.3 582.1 937.4 581.5 943.1 581.0 C948.9 580.5 955.0 580.0 960.3 580.4 C965.7 580.8 971.8 581.7 975.2 583.3 C978.6 584.9 980.0 587.5 980.9 590.2 C981.9 592.8 981.5 596.9 980.9 599.3 C980.4 601.8 978.1 604.1 977.5 605.1" stroke="#26c4a8"/>
<path d="M912.2 621.1 C911.7 620.3 909.9 619.4 909.3 616.5 C908.8 613.7 907.7 607.5 908.8 603.9 C909.8 600.3 912.2 597.2 915.6 594.8 C919.1 592.3 923.8 590.5 929.4 589.0 C934.9 587.5 942.7 586.2 948.9 585.6 C955.0 585.0 961.5 584.8 966.0 585.6 C970.6 586.3 974.4 588.1 976.4 590.2 C978.3 592.3 977.9 595.7 977.5 598.2 C977.1 600.7 974.6 603.9 974.1 605.1" stroke="#24c8a0"/>
<path d="M916.8 619.4 C916.3 618.5 914.5 616.6 913.9 614.2 C913.3 611.8 911.9 607.9 913.3 605.1 C914.8 602.2 918.5 599.3 922.5 597.0 C926.5 594.8 932.0 592.5 937.4 591.3 C942.7 590.2 949.4 590.0 954.6 590.2 C959.7 590.4 965.3 590.9 968.3 592.5 C971.4 594.0 972.5 597.0 972.9 599.3 C973.3 601.6 971.0 605.1 970.6 606.2" stroke="#22cc9c"/>
<path d="M936.2 615.4 C935.9 614.2 934.1 611.6 934.0 608.5 C933.8 605.4 933.6 599.9 935.1 597.0 C936.6 594.2 939.5 592.6 943.1 591.3 C946.8 590.1 953.1 589.5 956.9 589.6 C960.7 589.7 963.9 590.5 966.0 591.9 C968.1 593.3 969.5 595.8 969.5 598.2 C969.5 600.6 966.6 604.9 966.0 606.2" stroke="#20d898"/>
<path d="M940.8 614.2 C940.5 613.5 938.8 612.1 938.8 609.6 C938.8 607.2 939.0 602.0 940.8 599.3 C942.7 596.7 946.6 594.7 950.0 593.6 C953.4 592.6 958.8 592.3 961.5 593.0 C964.1 593.8 965.7 596.0 966.0 598.2 C966.4 600.4 964.1 604.9 963.8 606.2" stroke="#18e490"/>
<ellipse cx="958.6" cy="601.6" rx="5.5" ry="4.0" stroke="#10ec8c"/>
<ellipse cx="917.9" cy="607.9" rx="4.0" ry="4.0" stroke="#20d898"/>
<path d="M870.4 602.2 C871.6 603.2 874.9 605.9 877.8 608.5 C880.8 611.1 884.5 615.0 888.1 617.7 C891.8 620.3 895.8 623.0 899.6 624.5 C903.4 626.1 909.1 626.5 911.0 626.8" stroke="#38b0c8"/>
<path d="M881.8 601.6 C882.5 603.0 883.8 607.0 885.8 609.6 C887.8 612.3 890.8 615.4 893.9 617.7 C896.9 620.0 900.2 622.2 904.2 623.4 C908.2 624.5 915.6 624.4 917.9 624.5" stroke="#38b0c8"/>
<path d="M870.4 611.9 C871.6 612.9 874.9 615.4 877.8 617.7 C880.8 620.0 884.1 623.8 888.1 625.7 C892.1 627.6 896.5 628.7 901.9 629.1 C907.2 629.5 917.2 628.2 920.2 628.0" stroke="#30b4d0"/>
<path d="M870.4 621.1 C871.8 622.1 875.6 624.9 879.0 626.8 C882.3 628.7 886.2 631.4 890.4 632.6 C894.6 633.7 901.9 633.5 904.2 633.7" stroke="#30b4d8"/>
<path d="M870.9 625.7 C872.5 626.6 876.9 629.7 880.1 631.4 C883.4 633.1 886.4 635.0 890.4 636.0 C894.4 637.0 901.9 637.0 904.2 637.1" stroke="#2cb4e0"/>
<path d="M872.1 631.4 C873.6 632.2 877.8 634.7 881.2 636.0 C884.7 637.3 888.9 638.5 892.7 639.4 C896.5 640.4 902.3 641.3 904.2 641.7" stroke="#5aa8c8"/>
<path d="M873.2 637.1 C874.9 637.7 879.9 639.4 883.5 640.6 C887.2 641.7 893.1 643.4 895.0 644.0" stroke="#70a8c0"/>
<path d="M976.8 418.3 C977.3 417.0 979.1 412.0 980.2 410.3 C981.4 408.6 983.1 408.4 983.6 408.0" stroke="#52aed4"/>
<path d="M976.8 426.9 C977.5 425.1 979.3 418.7 981.4 416.0 C983.5 413.3 986.1 411.9 989.4 410.9 C992.6 409.8 997.0 409.4 1000.8 409.7 C1004.7 410.0 1009.2 411.5 1012.3 412.6 C1015.3 413.6 1017.1 415.3 1019.2 416.0 C1021.3 416.8 1023.9 417.0 1024.9 417.2" stroke="#52aed4"/>
<path d="M976.8 437.2 C977.3 435.2 978.3 428.4 980.2 425.2 C982.1 421.9 984.8 419.3 988.2 417.7 C991.7 416.2 996.4 416.2 1000.8 416.0 C1005.2 415.8 1010.6 416.3 1014.6 416.6 C1018.6 416.9 1023.2 417.5 1024.9 417.7" stroke="#2ab4e4"/>
<path d="M1018.0 408.0 C1019.2 409.0 1022.6 413.7 1024.9 413.7 C1027.2 413.7 1030.6 409.0 1031.8 408.0" stroke="#52aed4"/>
<path d="M1024.9 416.9 C1027.0 416.4 1032.5 414.6 1037.5 413.7 C1042.5 412.9 1049.9 412.7 1054.7 412.0 C1059.5 411.3 1063.3 410.4 1066.1 409.7 C1069.0 409.1 1070.9 408.3 1071.9 408.0" stroke="#2ab4e4"/>
<path d="M1026.0 417.7 C1028.9 417.8 1036.5 418.1 1043.2 418.3 C1049.9 418.5 1060.8 419.6 1066.1 418.9 C1071.5 418.2 1072.8 416.1 1075.3 414.3 C1077.8 412.5 1080.1 409.1 1081.0 408.0" stroke="#2ab4e4"/>
<path d="M1026.0 421.8 C1029.9 422.3 1032.7 423.5 1037.5 425.2 C1042.3 426.9 1049.1 429.5 1054.7 432.1 C1060.2 434.6 1066.7 440.7 1070.7 440.7 C1074.7 440.7 1076.5 434.1 1078.8 432.1 C1081.0 430.1 1081.8 428.4 1084.5 428.6 C1087.2 428.8 1091.2 431.9 1094.8 433.2 C1098.4 434.5 1103.4 434.5 1106.2 436.6 C1109.1 438.7 1110.6 442.4 1112.0 445.8 C1113.3 449.2 1114.8 453.5 1114.3 457.3 C1113.7 461.1 1110.6 464.7 1108.5 468.7 C1106.4 472.7 1104.0 478.1 1101.7 481.3 C1099.4 484.6 1097.7 486.7 1094.8 488.2 C1091.9 489.7 1088.3 490.9 1084.5 490.5 C1080.7 490.1 1076.3 487.8 1071.9 485.9 C1067.5 484.0 1061.9 481.1 1058.1 479.0 C1054.3 476.9 1052.0 475.6 1049.0 473.3 C1045.9 471.0 1042.5 468.3 1039.8 465.3 C1037.1 462.2 1035.2 458.0 1032.9 455.0 C1030.6 451.9 1028.7 449.1 1026.0 447.0 C1023.4 444.9 1020.7 443.1 1016.9 442.4 C1013.1 441.6 1007.3 442.8 1003.1 442.4 C998.9 442.0 994.1 441.6 991.7 440.1 C989.2 438.6 988.2 435.7 988.2 433.2 C988.2 430.7 989.2 427.0 991.7 425.2 C994.1 423.4 999.3 422.9 1003.1 422.3 C1006.9 421.8 1010.8 421.8 1014.6 421.8 C1018.4 421.7 1022.2 421.2 1026.0 421.8Z" stroke="#2ab4e4"/>
<path d="M1083.3 408.0 C1085.2 408.9 1091.0 412.2 1094.8 413.2 C1098.6 414.1 1102.8 412.1 1106.2 413.7 C1109.7 415.4 1113.1 419.1 1115.4 422.9 C1117.7 426.7 1119.2 434.4 1120.0 436.6" stroke="#2ab4e4"/>
<path d="M1120.0 465.3 C1118.9 466.4 1115.0 468.7 1113.1 472.2 C1111.2 475.6 1108.9 482.3 1108.5 485.9 C1108.2 489.5 1108.9 493.2 1110.8 493.9 C1112.7 494.7 1118.5 491.1 1120.0 490.5" stroke="#2ab4e4"/>
<path d="M1120.0 502.0 C1117.7 502.9 1111.4 506.5 1106.2 507.7 C1101.1 508.8 1092.5 507.9 1089.1 508.8 C1085.6 509.8 1085.6 510.6 1085.6 513.4 C1085.6 516.3 1088.5 523.9 1089.1 526.0" stroke="#2ab4e4"/>
<path d="M1097.1 526.0 C1097.1 524.3 1095.9 518.0 1097.1 515.7 C1098.2 513.4 1101.7 512.7 1104.0 512.3 C1106.2 511.9 1109.5 511.7 1110.8 513.4 C1112.2 515.1 1112.0 520.5 1112.0 522.6 C1112.0 524.7 1111.0 525.4 1110.8 526.0" stroke="#2ab4e4"/>
<ellipse cx="1082.8" cy="518.6" rx="1.1" ry="1.1" stroke="#2ab4e4"/>
<path d="M1033.5 445.8 C1034.1 442.6 1037.2 438.6 1039.8 437.8 C1042.4 437.0 1046.1 438.9 1049.0 441.2 C1051.8 443.5 1055.4 448.3 1057.0 451.5 C1058.6 454.8 1059.3 458.1 1058.7 460.7 C1058.1 463.3 1055.9 466.2 1053.5 467.0 C1051.2 467.8 1047.2 466.9 1044.4 465.3 C1041.5 463.7 1038.2 460.5 1036.4 457.3 C1034.5 454.0 1032.9 449.1 1033.5 445.8Z" stroke="#52aed4"/>
<ellipse cx="1016.3" cy="471.6" rx="6.6" ry="2.9" stroke="#a0aaab"/>
<path d="M996.8 473.9 C996.4 472.7 998.6 471.1 1000.8 469.9 C1003.0 468.6 1006.8 467.3 1010.0 466.4 C1013.2 465.6 1017.8 464.5 1020.3 464.7 C1022.8 464.9 1023.7 466.2 1024.9 467.6 C1026.0 469.0 1027.2 471.8 1027.2 473.3 C1027.2 474.8 1027.0 476.1 1024.9 476.8 C1022.8 477.4 1018.2 477.3 1014.6 477.3 C1011.0 477.3 1006.1 477.3 1003.1 476.8 C1000.2 476.2 997.2 475.0 996.8 473.9Z" stroke="#a0aaab"/>
<path d="M980.2 475.6 C979.1 473.6 981.9 469.9 984.8 467.6 C987.7 465.3 992.8 463.1 997.4 461.9 C1002.0 460.6 1007.9 460.3 1012.3 460.1 C1016.7 459.9 1020.9 459.7 1023.8 460.7 C1026.6 461.8 1028.0 464.1 1029.5 466.4 C1031.0 468.7 1032.0 472.2 1032.9 474.5 C1033.9 476.8 1036.4 479.0 1035.2 480.2 C1034.1 481.3 1030.4 481.3 1026.0 481.3 C1021.6 481.3 1014.6 480.5 1008.9 480.2 C1003.1 479.9 996.4 480.4 991.7 479.6 C986.9 478.9 981.4 477.6 980.2 475.6Z" stroke="#a0aaab"/>
<path d="M973.3 476.8 C972.8 474.3 976.0 469.5 979.1 466.4 C982.1 463.4 986.7 460.3 991.7 458.4 C996.6 456.5 1003.7 455.4 1008.9 455.0 C1014.0 454.6 1019.0 454.8 1022.6 456.1 C1026.2 457.5 1028.1 460.1 1030.6 463.0 C1033.1 465.9 1035.8 469.9 1037.5 473.3 C1039.2 476.8 1041.9 481.1 1040.9 483.6 C1040.0 486.1 1036.2 487.6 1031.8 488.2 C1027.4 488.8 1020.1 487.6 1014.6 487.1 C1009.0 486.5 1003.9 485.7 998.5 484.8 C993.2 483.8 986.7 482.7 982.5 481.3 C978.3 480.0 973.9 479.2 973.3 476.8Z" stroke="#a0aaab"/>
<path d="M969.9 472.2 C970.5 469.1 971.8 465.9 974.5 463.0 C977.2 460.1 981.2 456.8 985.9 455.0 C990.7 453.2 997.2 452.7 1003.1 452.1 C1009.0 451.5 1016.9 450.5 1021.5 451.5 C1026.0 452.6 1027.8 455.4 1030.6 458.4 C1033.5 461.5 1036.0 466.1 1038.6 469.9 C1041.3 473.7 1044.2 476.8 1046.7 481.3 C1049.1 485.9 1053.5 493.7 1053.5 497.4 C1053.5 501.0 1050.3 502.7 1046.7 503.1 C1043.0 503.5 1037.1 500.8 1031.8 499.7 C1026.4 498.5 1020.5 497.6 1014.6 496.2 C1008.7 494.9 1002.0 493.2 996.2 491.6 C990.5 490.1 984.4 488.8 980.2 487.1 C976.0 485.3 972.8 483.8 971.0 481.3 C969.3 478.9 969.3 475.2 969.9 472.2Z" stroke="#a0aaab"/>
<path d="M967.0 469.9 C968.0 466.4 970.8 463.6 973.3 460.7 C975.9 457.8 978.5 454.8 982.5 452.7 C986.5 450.6 992.0 449.0 997.4 448.1 C1002.7 447.2 1009.8 447.0 1014.6 447.5 C1019.4 448.1 1022.6 449.2 1026.0 451.5 C1029.5 453.9 1032.2 458.2 1035.2 461.9 C1038.3 465.5 1041.1 469.9 1044.4 473.3 C1047.6 476.8 1051.2 478.9 1054.7 482.5 C1058.1 486.1 1062.9 491.1 1065.0 495.1 C1067.1 499.1 1068.4 504.2 1067.3 506.5 C1066.1 508.8 1063.1 509.0 1058.1 508.8 C1053.2 508.6 1043.8 506.4 1037.5 505.4 C1031.2 504.4 1026.0 504.1 1020.3 503.1 C1014.6 502.1 1008.9 501.0 1003.1 499.7 C997.4 498.3 990.7 496.8 985.9 495.1 C981.2 493.4 977.5 491.6 974.5 489.4 C971.4 487.1 968.8 484.6 967.6 481.3 C966.4 478.1 966.1 473.3 967.0 469.9Z" stroke="#52aed4"/>
<path d="M964.2 471.0 C964.2 466.2 966.5 465.9 968.8 463.0 C971.0 460.1 974.9 456.5 977.9 453.8 C981.0 451.2 982.9 448.7 987.1 447.0 C991.3 445.2 997.8 444.1 1003.1 443.5 C1008.5 442.9 1014.8 442.6 1019.2 443.5 C1023.6 444.5 1026.2 446.2 1029.5 449.2 C1032.7 452.3 1035.4 458.0 1038.6 461.9 C1041.9 465.7 1044.9 468.9 1049.0 472.2 C1053.0 475.4 1058.1 478.1 1062.7 481.3 C1067.3 484.6 1072.3 488.2 1076.5 491.6 C1080.7 495.1 1087.5 499.3 1087.9 502.0 C1088.3 504.6 1081.8 506.2 1078.8 507.7 C1075.7 509.2 1074.5 510.6 1069.6 511.1 C1064.6 511.7 1055.3 511.7 1049.0 511.1 C1042.7 510.6 1037.5 508.6 1031.8 507.7 C1026.0 506.7 1020.3 506.2 1014.6 505.4 C1008.9 504.6 1003.1 504.2 997.4 503.1 C991.7 502.0 985.0 500.4 980.2 498.5 C975.4 496.6 971.4 496.2 968.8 491.6 C966.1 487.1 964.2 475.8 964.2 471.0Z" stroke="#2ab4e4"/>
<path d="M926.4 507.7 C927.3 506.2 929.2 500.4 932.1 498.5 C934.9 496.6 939.3 496.0 943.5 496.2 C947.7 496.4 953.1 498.9 957.3 499.7 C961.5 500.4 964.9 500.2 968.8 500.8 C972.6 501.4 976.4 502.0 980.2 503.1 C984.0 504.2 987.8 505.8 991.7 507.7 C995.5 509.6 999.3 512.7 1003.1 514.6 C1006.9 516.5 1010.8 517.8 1014.6 519.1 C1018.4 520.5 1022.2 521.4 1026.0 522.6 C1029.9 523.7 1035.6 525.4 1037.5 526.0" stroke="#2ab4e4"/>
<path d="M943.5 488.8 C945.1 489.4 949.3 491.6 952.7 492.8 C956.1 494.0 960.0 494.9 964.2 496.2 C968.4 497.6 973.3 499.3 977.9 500.8 C982.5 502.3 986.5 503.7 991.7 505.4 C996.8 507.1 1003.1 509.4 1008.9 511.1 C1014.6 512.8 1019.4 514.6 1026.0 515.7 C1032.7 516.9 1042.3 518.0 1049.0 518.0 C1055.6 518.0 1061.2 517.2 1066.1 515.7 C1071.1 514.2 1074.9 511.1 1078.8 508.8 C1082.6 506.5 1087.3 503.1 1089.1 502.0" stroke="#2ab4e4"/>
<path d="M954.4 486.5 C955.5 486.8 958.3 486.8 960.7 488.2 C963.1 489.6 965.1 493.2 968.8 495.1 C972.4 497.0 977.7 498.1 982.5 499.7 C987.3 501.2 992.0 502.7 997.4 504.2 C1002.7 505.8 1008.9 507.5 1014.6 508.8 C1020.3 510.2 1025.1 511.5 1031.8 512.3 C1038.5 513.0 1048.4 513.6 1054.7 513.4 C1061.0 513.2 1064.0 512.8 1069.6 511.1 C1075.1 509.4 1084.9 504.4 1087.9 503.1" stroke="#2ab4e4"/>
<path d="M963.6 480.2 C964.3 481.7 965.2 486.9 967.6 489.4 C970.0 491.8 973.9 493.6 977.9 495.1 C981.9 496.6 986.5 497.2 991.7 498.5 C996.8 499.9 1003.1 501.6 1008.9 503.1 C1014.6 504.6 1019.4 506.5 1026.0 507.7 C1032.7 508.8 1042.3 510.0 1049.0 510.0 C1055.6 510.0 1061.9 509.0 1066.1 507.7 C1070.3 506.4 1072.8 502.9 1074.2 502.0" stroke="#2ab4e4"/>
<path d="M928.1 509.5 C930.0 510.1 935.4 512.3 939.6 513.5 C943.8 514.6 949.1 514.5 953.3 516.4 C957.5 518.2 961.4 521.7 964.8 524.4 C968.1 527.0 971.4 529.7 973.4 532.4 C975.4 535.1 976.6 537.9 976.8 540.4 C977.0 542.9 976.4 545.3 974.5 547.3 C972.6 549.3 968.5 552.4 965.4 552.4 C962.2 552.5 958.5 550.1 955.6 547.9 C952.8 545.7 949.8 542.4 948.2 539.3 C946.6 536.1 946.9 531.6 945.9 529.0 C944.8 526.3 943.7 524.2 941.9 523.5 C940.1 522.7 937.7 523.8 935.0 524.4 C932.3 524.9 928.7 527.1 925.8 526.9 C923.0 526.6 919.1 523.6 917.8 522.9" stroke="#2ab4e4"/>
<path d="M965.4 511.8 C966.3 509.7 968.7 507.8 971.7 507.2 C974.6 506.6 979.7 506.8 983.1 508.3 C986.6 509.9 989.6 513.3 992.3 516.4 C995.0 519.4 997.4 523.2 999.2 526.7 C1001.0 530.1 1001.9 533.8 1003.2 537.0 C1004.4 540.1 1006.6 543.7 1006.6 545.6 C1006.6 547.5 1005.2 548.7 1003.2 548.4 C1001.2 548.2 997.9 546.1 994.6 543.9 C991.2 541.6 986.9 537.6 983.1 534.7 C979.3 531.8 974.5 529.1 971.7 526.7 C968.8 524.2 967.0 522.3 965.9 519.8 C964.9 517.3 964.4 513.9 965.4 511.8Z" stroke="#2ab4e4"/>
<path d="M994.6 502.6 C996.5 504.3 1003.4 509.3 1006.0 512.9 C1008.7 516.5 1009.3 521.0 1010.6 524.4 C1012.0 527.7 1012.9 531.7 1014.1 533.0 C1015.2 534.2 1016.4 533.1 1017.5 531.8 C1018.6 530.6 1019.7 526.8 1020.9 525.5 C1022.2 524.3 1023.4 524.0 1024.9 524.4 C1026.5 524.8 1028.5 525.7 1030.1 527.8 C1031.7 529.9 1033.0 534.5 1034.7 537.0 C1036.4 539.5 1037.6 540.8 1040.4 542.7 C1043.3 544.6 1048.1 546.5 1051.9 548.4 C1055.7 550.3 1059.9 552.9 1063.3 554.2 C1066.8 555.4 1069.1 556.6 1072.5 555.9 C1075.9 555.2 1081.2 550.7 1084.0 550.2 C1086.7 549.6 1087.9 550.1 1089.1 552.4 C1090.4 554.8 1091.0 562.5 1091.4 564.5" stroke="#2ab4e4"/>
<path d="M1017.5 514.6 C1019.4 515.3 1025.1 517.0 1029.0 518.6 C1032.8 520.3 1036.6 522.5 1040.4 524.4 C1044.2 526.3 1048.4 528.7 1051.9 530.1 C1055.3 531.5 1057.6 533.2 1061.0 533.0 C1064.5 532.8 1068.5 530.0 1072.5 529.0 C1076.5 527.9 1082.4 527.8 1085.1 526.7 C1087.8 525.5 1088.4 524.4 1088.5 522.1 C1088.7 519.8 1086.1 515.2 1086.2 512.9 C1086.4 510.6 1087.4 509.3 1089.7 508.3 C1092.0 507.4 1098.3 507.4 1100.0 507.2" stroke="#2ab4e4"/><clipPath id="bclip"><path d="M860 590 L1010 590 L1010 614.5 L989 614.5 L989 625 L860 660Z"/></clipPath><g clip-path="url(#bclip)"><path d="M871.6 618.0 C874.5 618.6 883.7 621.2 889.1 621.7 C894.4 622.2 898.8 621.6 903.6 621.0 C908.4 620.5 913.3 619.3 918.1 618.1 C923.0 616.9 927.8 615.2 932.7 613.7 C937.5 612.3 942.4 611.1 947.2 609.4 C952.1 607.7 957.2 605.3 961.7 603.6 C966.3 601.9 971.1 600.2 974.3 599.2 C977.6 598.2 978.9 597.6 981.1 597.8 C983.4 597.9 985.6 598.8 987.9 599.9 C990.2 601.0 992.8 603.0 994.7 604.5 C996.6 606.0 998.2 607.4 999.5 608.9 C1000.8 610.4 1001.6 611.7 1002.4 613.3 C1003.2 614.8 1004.1 617.3 1004.4 618.1" stroke="#24e894" stroke-width="1.4"/><path d="M871.6 620.9 C874.5 621.4 883.7 623.4 889.1 623.6 C894.4 623.8 898.8 622.9 903.6 622.1 C908.4 621.4 913.3 620.3 918.1 619.1 C923.0 617.9 927.8 616.2 932.7 614.7 C937.5 613.3 942.4 612.1 947.2 610.4 C952.1 608.7 957.2 606.3 961.7 604.6 C966.3 602.9 971.1 601.2 974.3 600.2 C977.6 599.2 978.9 598.6 981.1 598.8 C983.4 598.9 985.6 599.8 987.9 600.9 C990.2 602.0 992.8 604.0 994.7 605.5 C996.6 607.0 998.2 608.4 999.5 609.9 C1000.8 611.4 1001.6 612.7 1002.4 614.3 C1003.2 615.8 1004.1 618.3 1004.4 619.1" stroke="#20e49c" stroke-width="1.4"/><path d="M871.6 623.9 C874.5 624.2 883.7 625.7 889.1 625.5 C894.4 625.4 898.8 624.1 903.6 623.2 C908.4 622.3 913.3 621.3 918.1 620.1 C923.0 618.9 927.8 617.2 932.7 615.7 C937.5 614.3 942.4 613.1 947.2 611.4 C952.1 609.7 957.2 607.3 961.7 605.6 C966.3 603.9 971.1 602.2 974.3 601.2 C977.6 600.2 978.9 599.6 981.1 599.8 C983.4 599.9 985.6 600.8 987.9 601.9 C990.2 603.0 992.8 605.0 994.7 606.5 C996.6 608.0 998.2 609.4 999.5 610.9 C1000.8 612.4 1001.6 613.7 1002.4 615.3 C1003.2 616.8 1004.1 619.3 1004.4 620.1" stroke="#1edcb0" stroke-width="1.4"/><path d="M871.6 626.9 C874.5 627.0 883.7 627.9 889.1 627.5 C894.4 627.1 898.8 625.4 903.6 624.3 C908.4 623.2 913.3 622.4 918.1 621.1 C923.0 619.8 927.8 618.2 932.7 616.7 C937.5 615.3 942.4 614.1 947.2 612.4 C952.1 610.7 957.2 608.3 961.7 606.6 C966.3 604.9 971.1 603.2 974.3 602.2 C977.6 601.2 978.9 600.6 981.1 600.8 C983.4 600.9 985.6 601.8 987.9 602.9 C990.2 604.0 992.8 606.0 994.7 607.5 C996.6 609.0 998.2 610.4 999.5 611.9 C1000.8 613.4 1001.6 614.7 1002.4 616.3 C1003.2 617.8 1004.1 620.3 1004.4 621.1" stroke="#20d4c8" stroke-width="1.4"/><path d="M871.6 629.8 C874.5 629.8 883.7 630.2 889.1 629.4 C894.4 628.7 898.8 626.6 903.6 625.4 C908.4 624.2 913.3 623.4 918.1 622.1 C923.0 620.8 927.8 619.2 932.7 617.7 C937.5 616.3 942.4 615.1 947.2 613.4 C952.1 611.7 957.2 609.3 961.7 607.6 C966.3 605.9 971.1 604.2 974.3 603.2 C977.6 602.2 978.9 601.6 981.1 601.8 C983.4 601.9 985.6 602.8 987.9 603.9 C990.2 605.0 992.8 607.0 994.7 608.5 C996.6 610.0 998.2 611.4 999.5 612.9 C1000.8 614.4 1001.6 615.7 1002.4 617.3 C1003.2 618.8 1004.1 621.3 1004.4 622.1" stroke="#24ccdc" stroke-width="1.4"/><path d="M871.6 632.8 C874.5 632.5 883.7 632.4 889.1 631.4 C894.4 630.3 898.8 627.8 903.6 626.5 C908.4 625.1 913.3 624.4 918.1 623.1 C923.0 621.8 927.8 620.2 932.7 618.7 C937.5 617.3 942.4 616.1 947.2 614.4 C952.1 612.7 957.2 610.3 961.7 608.6 C966.3 606.9 971.1 605.2 974.3 604.2 C977.6 603.2 978.9 602.6 981.1 602.8 C983.4 602.9 985.6 603.8 987.9 604.9 C990.2 606.0 992.8 608.0 994.7 609.5 C996.6 611.0 998.2 612.4 999.5 613.9 C1000.8 615.4 1001.6 616.7 1002.4 618.3 C1003.2 619.8 1004.1 622.3 1004.4 623.1" stroke="#28c4ec" stroke-width="1.4"/><path d="M871.6 635.7 C874.5 635.3 883.7 634.7 889.1 633.3 C894.4 631.9 898.8 629.1 903.6 627.5 C908.4 626.0 913.3 625.4 918.1 624.1 C923.0 622.8 927.8 621.2 932.7 619.7 C937.5 618.3 942.4 617.1 947.2 615.4 C952.1 613.7 957.2 611.3 961.7 609.6 C966.3 607.9 971.1 606.2 974.3 605.2 C977.6 604.2 978.9 603.6 981.1 603.8 C983.4 603.9 985.6 604.8 987.9 605.9 C990.2 607.0 992.8 609.0 994.7 610.5 C996.6 612.0 998.2 613.4 999.5 614.9 C1000.8 616.4 1001.6 617.7 1002.4 619.3 C1003.2 620.8 1004.1 623.3 1004.4 624.1" stroke="#30bcf0" stroke-width="1.4"/><path d="M871.6 638.7 C874.5 638.1 883.7 636.9 889.1 635.2 C894.4 633.5 898.8 630.3 903.6 628.6 C908.4 626.9 913.3 626.4 918.1 625.1 C923.0 623.8 927.8 622.2 932.7 620.7 C937.5 619.3 942.4 618.1 947.2 616.4 C952.1 614.7 957.2 612.3 961.7 610.6 C966.3 608.9 971.1 607.2 974.3 606.2 C977.6 605.2 978.9 604.6 981.1 604.8 C983.4 604.9 985.6 605.8 987.9 606.9 C990.2 608.0 992.8 610.0 994.7 611.5 C996.6 613.0 998.2 614.4 999.5 615.9 C1000.8 617.4 1001.6 618.7 1002.4 620.3 C1003.2 621.8 1004.1 624.3 1004.4 625.1" stroke="#48b4e4" stroke-width="1.4"/><path d="M871.6 641.7 C874.5 640.9 883.7 639.2 889.1 637.2 C894.4 635.2 898.8 631.5 903.6 629.7 C908.4 627.9 913.3 627.4 918.1 626.1 C923.0 624.8 927.8 623.2 932.7 621.7 C937.5 620.3 942.4 619.1 947.2 617.4 C952.1 615.7 957.2 613.3 961.7 611.6 C966.3 609.9 971.1 608.2 974.3 607.2 C977.6 606.2 978.9 605.6 981.1 605.8 C983.4 605.9 985.6 606.8 987.9 607.9 C990.2 609.0 992.8 611.0 994.7 612.5 C996.6 614.0 998.2 615.4 999.5 616.9 C1000.8 618.4 1001.6 619.7 1002.4 621.3 C1003.2 622.8 1004.1 625.3 1004.4 626.1" stroke="#70acd0" stroke-width="1.4"/><path d="M871.6 644.6 C874.5 643.7 883.7 641.4 889.1 639.1 C894.4 636.8 898.8 632.8 903.6 630.8 C908.4 628.8 913.3 628.4 918.1 627.1 C923.0 625.8 927.8 624.2 932.7 622.7 C937.5 621.3 942.4 620.1 947.2 618.4 C952.1 616.7 957.2 614.3 961.7 612.6 C966.3 610.9 971.1 609.2 974.3 608.2 C977.6 607.2 978.9 606.6 981.1 606.8 C983.4 606.9 985.6 607.8 987.9 608.9 C990.2 610.0 992.8 612.0 994.7 613.5 C996.6 615.0 998.2 616.4 999.5 617.9 C1000.8 619.4 1001.6 620.7 1002.4 622.3 C1003.2 623.8 1004.1 626.3 1004.4 627.1" stroke="#98a4b0" stroke-width="1.4"/><path d="M871.6 647.6 C874.5 646.5 883.7 643.7 889.1 641.0 C894.4 638.4 898.8 634.0 903.6 631.9 C908.4 629.7 913.3 629.5 918.1 628.1 C923.0 626.8 927.8 625.2 932.7 623.7 C937.5 622.3 942.4 621.1 947.2 619.4 C952.1 617.7 957.2 615.3 961.7 613.6 C966.3 611.9 971.1 610.2 974.3 609.2 C977.6 608.2 978.9 607.6 981.1 607.8 C983.4 607.9 985.6 608.8 987.9 609.9 C990.2 611.0 992.8 613.0 994.7 614.5 C996.6 616.0 998.2 617.4 999.5 618.9 C1000.8 620.4 1001.6 621.7 1002.4 623.3 C1003.2 624.8 1004.1 627.3 1004.4 628.1" stroke="#b49c90" stroke-width="1.4"/><path d="M871.6 650.6 C874.5 649.3 883.7 645.9 889.1 643.0 C894.4 640.0 898.8 635.3 903.6 632.9 C908.4 630.6 913.3 630.5 918.1 629.1 C923.0 627.7 927.8 626.2 932.7 624.7 C937.5 623.3 942.4 622.1 947.2 620.4 C952.1 618.7 957.2 616.3 961.7 614.6 C966.3 612.9 971.1 611.2 974.3 610.2 C977.6 609.2 978.9 608.6 981.1 608.8 C983.4 608.9 985.6 609.8 987.9 610.9 C990.2 612.0 992.8 614.0 994.7 615.5 C996.6 617.0 998.2 618.4 999.5 619.9 C1000.8 621.4 1001.6 622.7 1002.4 624.3 C1003.2 625.8 1004.1 628.3 1004.4 629.1" stroke="#c89878" stroke-width="1.4"/></g>
<clipPath id="oclip"><path d="M860 560 L1000 560 L1000 613 L989 614 L989 625 L978 625.5 L978 658 L957 660.5 L941 669.5 L918 671.5 L860 672Z"/></clipPath><g clip-path="url(#oclip)"><path d="M948.8 635.1 C948.8 635.2 948.9 635.3 948.9 635.4 C948.9 635.5 948.9 635.7 948.9 635.8 C948.9 635.9 948.9 636.0 948.9 636.1 C948.9 636.2 948.8 636.4 948.8 636.5 C948.8 636.6 948.7 636.7 948.7 636.8 C948.6 637.0 948.5 637.1 948.5 637.2 C948.4 637.3 948.3 637.4 948.2 637.5 C948.1 637.6 948.0 637.7 947.9 637.8 C947.8 637.9 947.7 638.0 947.6 638.1 C947.5 638.2 947.3 638.3 947.2 638.4 C947.1 638.4 946.9 638.5 946.8 638.6 C946.7 638.6 946.5 638.7 946.4 638.7 C946.2 638.8 946.1 638.8 946.0 638.9 C945.8 638.9 945.7 638.9 945.5 639.0 C945.4 639.0 945.2 639.0 945.1 639.0 C944.9 639.0 944.8 639.0 944.6 639.0 C944.5 639.0 944.3 639.0 944.2 639.0 C944.1 638.9 943.9 638.9 943.8 638.9 C943.7 638.8 943.5 638.8 943.4 638.7 C943.3 638.7 943.2 638.6 943.1 638.6 C943.0 638.5 942.9 638.4 942.8 638.3 C942.7 638.3 942.6 638.2 942.6 638.1 C942.5 638.0 942.4 637.9 942.4 637.8 C942.3 637.7 942.2 637.6 942.2 637.5 C942.2 637.4 942.1 637.3 942.1 637.2 C942.1 637.1 942.1 636.9 942.1 636.8 C942.1 636.7 942.1 636.6 942.1 636.5 C942.1 636.4 942.2 636.2 942.2 636.1 C942.2 636.0 942.3 635.9 942.3 635.8 C942.4 635.6 942.5 635.5 942.5 635.4 C942.6 635.3 942.7 635.2 942.8 635.1 C942.9 635.0 943.0 634.9 943.1 634.8 C943.2 634.7 943.3 634.6 943.4 634.5 C943.5 634.4 943.7 634.3 943.8 634.2 C943.9 634.2 944.1 634.1 944.2 634.0 C944.3 634.0 944.5 633.9 944.6 633.9 C944.8 633.8 944.9 633.8 945.0 633.7 C945.2 633.7 945.3 633.7 945.5 633.6 C945.6 633.6 945.8 633.6 945.9 633.6 C946.1 633.6 946.2 633.6 946.4 633.6 C946.5 633.6 946.7 633.6 946.8 633.6 C946.9 633.7 947.1 633.7 947.2 633.7 C947.3 633.8 947.5 633.8 947.6 633.9 C947.7 633.9 947.8 634.0 947.9 634.0 C948.0 634.1 948.1 634.2 948.2 634.3 C948.3 634.3 948.4 634.4 948.4 634.5 C948.5 634.6 948.6 634.7 948.6 634.8 C948.7 634.9 948.8 635.0 948.8 635.1Z" stroke="#f26e1c" stroke-width="1.35"/><path d="M951.1 634.7 C951.2 634.9 951.2 635.0 951.2 635.2 C951.3 635.4 951.3 635.6 951.3 635.8 C951.3 636.0 951.2 636.2 951.2 636.3 C951.1 636.5 951.1 636.7 951.0 636.9 C950.9 637.1 950.8 637.3 950.7 637.5 C950.6 637.7 950.5 637.9 950.3 638.1 C950.2 638.3 950.0 638.5 949.9 638.6 C949.7 638.8 949.5 639.0 949.3 639.2 C949.1 639.3 948.9 639.5 948.7 639.6 C948.5 639.8 948.2 639.9 948.0 640.1 C947.8 640.2 947.5 640.3 947.3 640.4 C947.0 640.6 946.8 640.7 946.5 640.8 C946.2 640.9 946.0 640.9 945.7 641.0 C945.4 641.1 945.2 641.2 944.9 641.2 C944.6 641.3 944.3 641.3 944.1 641.3 C943.8 641.3 943.5 641.3 943.3 641.3 C943.0 641.3 942.8 641.3 942.5 641.3 C942.3 641.3 942.0 641.2 941.8 641.2 C941.6 641.1 941.4 641.1 941.2 641.0 C940.9 640.9 940.8 640.8 940.6 640.7 C940.4 640.6 940.2 640.5 940.1 640.4 C939.9 640.3 939.8 640.2 939.6 640.0 C939.5 639.9 939.4 639.7 939.3 639.6 C939.2 639.4 939.1 639.3 939.1 639.1 C939.0 638.9 938.9 638.7 938.9 638.6 C938.9 638.4 938.9 638.2 938.9 638.0 C938.9 637.8 938.9 637.6 939.0 637.4 C939.0 637.2 939.1 637.1 939.2 636.9 C939.2 636.7 939.3 636.5 939.4 636.3 C939.6 636.1 939.7 635.9 939.8 635.7 C940.0 635.5 940.1 635.3 940.3 635.2 C940.5 635.0 940.7 634.8 940.8 634.6 C941.0 634.5 941.3 634.3 941.5 634.2 C941.7 634.0 941.9 633.9 942.2 633.7 C942.4 633.6 942.6 633.5 942.9 633.3 C943.2 633.2 943.4 633.1 943.7 633.0 C943.9 632.9 944.2 632.8 944.5 632.8 C944.7 632.7 945.0 632.6 945.3 632.6 C945.6 632.5 945.8 632.5 946.1 632.5 C946.4 632.5 946.6 632.4 946.9 632.4 C947.1 632.4 947.4 632.5 947.6 632.5 C947.9 632.5 948.1 632.6 948.4 632.6 C948.6 632.7 948.8 632.7 949.0 632.8 C949.2 632.9 949.4 633.0 949.6 633.1 C949.8 633.2 950.0 633.3 950.1 633.4 C950.3 633.5 950.4 633.6 950.5 633.8 C950.7 633.9 950.8 634.1 950.9 634.2 C951.0 634.4 951.1 634.5 951.1 634.7Z" stroke="#ef7021" stroke-width="1.35"/><path d="M953.4 634.3 C953.5 634.5 953.6 634.8 953.6 635.0 C953.6 635.3 953.7 635.5 953.6 635.8 C953.6 636.0 953.6 636.3 953.5 636.6 C953.4 636.8 953.3 637.1 953.2 637.4 C953.1 637.6 953.0 637.9 952.8 638.2 C952.6 638.5 952.4 638.7 952.2 639.0 C952.0 639.2 951.8 639.5 951.5 639.8 C951.3 640.0 951.0 640.3 950.7 640.5 C950.4 640.7 950.1 641.0 949.8 641.2 C949.5 641.4 949.1 641.6 948.8 641.8 C948.5 642.0 948.1 642.2 947.7 642.3 C947.4 642.5 947.0 642.7 946.6 642.8 C946.2 642.9 945.8 643.1 945.4 643.2 C945.0 643.3 944.7 643.4 944.3 643.4 C943.9 643.5 943.5 643.6 943.1 643.6 C942.7 643.7 942.3 643.7 942.0 643.7 C941.6 643.7 941.2 643.7 940.9 643.6 C940.5 643.6 940.2 643.6 939.8 643.5 C939.5 643.4 939.2 643.3 938.9 643.3 C938.6 643.2 938.3 643.0 938.0 642.9 C937.8 642.8 937.5 642.6 937.3 642.5 C937.1 642.3 936.9 642.1 936.7 641.9 C936.5 641.8 936.4 641.6 936.2 641.3 C936.1 641.1 936.0 640.9 935.9 640.7 C935.8 640.5 935.8 640.2 935.7 640.0 C935.7 639.7 935.7 639.5 935.7 639.2 C935.7 638.9 935.8 638.7 935.8 638.4 C935.9 638.1 936.0 637.9 936.1 637.6 C936.2 637.3 936.4 637.1 936.5 636.8 C936.7 636.5 936.9 636.3 937.1 636.0 C937.3 635.7 937.5 635.5 937.8 635.2 C938.0 635.0 938.3 634.7 938.6 634.5 C938.9 634.3 939.2 634.0 939.5 633.8 C939.8 633.6 940.2 633.4 940.5 633.2 C940.9 633.0 941.2 632.8 941.6 632.6 C942.0 632.5 942.4 632.3 942.7 632.2 C943.1 632.0 943.5 631.9 943.9 631.8 C944.3 631.7 944.7 631.6 945.1 631.5 C945.5 631.5 945.9 631.4 946.2 631.4 C946.6 631.3 947.0 631.3 947.4 631.3 C947.8 631.3 948.1 631.3 948.5 631.3 C948.8 631.4 949.2 631.4 949.5 631.5 C949.8 631.5 950.2 631.6 950.4 631.7 C950.7 631.8 951.0 631.9 951.3 632.1 C951.6 632.2 951.8 632.3 952.0 632.5 C952.3 632.7 952.5 632.8 952.6 633.0 C952.8 633.2 953.0 633.4 953.1 633.6 C953.2 633.8 953.4 634.1 953.4 634.3Z" stroke="#ed7226" stroke-width="1.35"/><path d="M955.8 633.9 C955.9 634.2 955.9 634.5 956.0 634.8 C956.0 635.1 956.0 635.4 956.0 635.8 C956.0 636.1 955.9 636.4 955.8 636.8 C955.7 637.1 955.6 637.5 955.4 637.8 C955.3 638.2 955.1 638.5 954.9 638.9 C954.7 639.2 954.4 639.5 954.1 639.9 C953.8 640.2 953.5 640.6 953.2 640.9 C952.9 641.2 952.5 641.5 952.1 641.8 C951.7 642.1 951.3 642.4 950.9 642.7 C950.5 643.0 950.1 643.3 949.6 643.5 C949.1 643.8 948.7 644.0 948.2 644.2 C947.7 644.4 947.2 644.6 946.7 644.8 C946.2 645.0 945.7 645.2 945.2 645.3 C944.7 645.4 944.1 645.6 943.6 645.7 C943.1 645.8 942.6 645.9 942.1 645.9 C941.6 646.0 941.1 646.0 940.6 646.0 C940.1 646.0 939.6 646.0 939.2 646.0 C938.7 645.9 938.3 645.9 937.8 645.8 C937.4 645.7 937.0 645.6 936.6 645.5 C936.2 645.4 935.8 645.2 935.5 645.1 C935.2 644.9 934.8 644.7 934.6 644.5 C934.3 644.3 934.0 644.1 933.8 643.9 C933.5 643.6 933.3 643.4 933.2 643.1 C933.0 642.8 932.8 642.6 932.7 642.3 C932.6 642.0 932.6 641.7 932.5 641.4 C932.5 641.0 932.5 640.7 932.5 640.4 C932.5 640.1 932.6 639.7 932.7 639.4 C932.8 639.0 932.9 638.7 933.1 638.3 C933.2 638.0 933.4 637.7 933.6 637.3 C933.8 637.0 934.1 636.6 934.4 636.3 C934.7 635.9 935.0 635.6 935.3 635.3 C935.6 635.0 936.0 634.7 936.4 634.3 C936.8 634.0 937.2 633.7 937.6 633.5 C938.0 633.2 938.4 632.9 938.9 632.7 C939.4 632.4 939.8 632.2 940.3 632.0 C940.8 631.7 941.3 631.5 941.8 631.3 C942.3 631.2 942.8 631.0 943.3 630.9 C943.8 630.7 944.4 630.6 944.9 630.5 C945.4 630.4 945.9 630.3 946.4 630.3 C946.9 630.2 947.4 630.2 947.9 630.2 C948.4 630.1 948.9 630.2 949.3 630.2 C949.8 630.2 950.2 630.3 950.7 630.4 C951.1 630.4 951.5 630.5 951.9 630.7 C952.3 630.8 952.7 630.9 953.0 631.1 C953.3 631.3 953.7 631.4 953.9 631.6 C954.2 631.8 954.5 632.1 954.7 632.3 C955.0 632.5 955.2 632.8 955.3 633.1 C955.5 633.3 955.7 633.6 955.8 633.9Z" stroke="#eb752c" stroke-width="1.35"/><path d="M958.1 633.5 C958.2 633.8 958.3 634.2 958.4 634.6 C958.4 635.0 958.4 635.4 958.4 635.8 C958.3 636.2 958.3 636.6 958.1 637.0 C958.0 637.4 957.9 637.8 957.7 638.3 C957.5 638.7 957.2 639.1 956.9 639.5 C956.7 640.0 956.4 640.4 956.0 640.8 C955.7 641.2 955.3 641.6 954.9 642.0 C954.5 642.4 954.0 642.8 953.5 643.2 C953.1 643.5 952.6 643.9 952.0 644.2 C951.5 644.6 951.0 644.9 950.4 645.2 C949.8 645.5 949.2 645.8 948.6 646.1 C948.0 646.4 947.4 646.6 946.8 646.8 C946.2 647.1 945.6 647.3 944.9 647.4 C944.3 647.6 943.6 647.8 943.0 647.9 C942.4 648.0 941.7 648.1 941.1 648.2 C940.5 648.3 939.9 648.3 939.3 648.3 C938.7 648.4 938.1 648.4 937.5 648.3 C936.9 648.3 936.4 648.2 935.9 648.1 C935.3 648.0 934.8 647.9 934.3 647.8 C933.9 647.6 933.4 647.4 933.0 647.3 C932.6 647.1 932.2 646.8 931.8 646.6 C931.4 646.4 931.1 646.1 930.8 645.8 C930.6 645.5 930.3 645.2 930.1 644.9 C929.9 644.6 929.7 644.2 929.6 643.9 C929.5 643.5 929.4 643.1 929.3 642.8 C929.3 642.4 929.3 642.0 929.3 641.6 C929.3 641.2 929.4 640.8 929.5 640.3 C929.6 639.9 929.8 639.5 930.0 639.1 C930.2 638.7 930.4 638.2 930.7 637.8 C931.0 637.4 931.3 637.0 931.7 636.6 C932.0 636.2 932.4 635.8 932.8 635.4 C933.2 635.0 933.7 634.6 934.1 634.2 C934.6 633.8 935.1 633.5 935.6 633.1 C936.2 632.8 936.7 632.4 937.3 632.1 C937.8 631.8 938.4 631.5 939.0 631.3 C939.6 631.0 940.2 630.7 940.9 630.5 C941.5 630.3 942.1 630.1 942.7 629.9 C943.4 629.7 944.0 629.6 944.7 629.4 C945.3 629.3 945.9 629.2 946.5 629.1 C947.2 629.1 947.8 629.0 948.4 629.0 C949.0 629.0 949.6 629.0 950.2 629.0 C950.7 629.1 951.3 629.1 951.8 629.2 C952.3 629.3 952.9 629.4 953.3 629.6 C953.8 629.7 954.3 629.9 954.7 630.1 C955.1 630.3 955.5 630.5 955.9 630.8 C956.2 631.0 956.5 631.3 956.8 631.6 C957.1 631.8 957.4 632.1 957.6 632.5 C957.8 632.8 958.0 633.1 958.1 633.5Z" stroke="#e97731" stroke-width="1.35"/><path d="M960.4 633.1 C960.6 633.5 960.7 633.9 960.7 634.4 C960.8 634.8 960.8 635.3 960.7 635.8 C960.7 636.3 960.6 636.7 960.5 637.2 C960.3 637.7 960.1 638.2 959.9 638.7 C959.6 639.2 959.4 639.7 959.0 640.2 C958.7 640.7 958.3 641.2 957.9 641.7 C957.5 642.2 957.0 642.7 956.5 643.1 C956.0 643.6 955.5 644.0 954.9 644.5 C954.4 644.9 953.8 645.4 953.1 645.8 C952.5 646.2 951.9 646.6 951.2 646.9 C950.5 647.3 949.8 647.7 949.1 648.0 C948.4 648.3 947.6 648.6 946.9 648.9 C946.2 649.1 945.4 649.4 944.7 649.6 C943.9 649.8 943.1 650.0 942.4 650.1 C941.6 650.3 940.9 650.4 940.1 650.5 C939.4 650.6 938.7 650.7 937.9 650.7 C937.2 650.7 936.5 650.7 935.8 650.6 C935.2 650.6 934.5 650.5 933.9 650.4 C933.2 650.3 932.6 650.2 932.1 650.0 C931.5 649.9 930.9 649.7 930.4 649.4 C929.9 649.2 929.5 648.9 929.1 648.7 C928.6 648.4 928.2 648.1 927.9 647.7 C927.6 647.4 927.3 647.0 927.0 646.7 C926.8 646.3 926.6 645.9 926.4 645.5 C926.3 645.0 926.2 644.6 926.1 644.2 C926.1 643.7 926.1 643.2 926.1 642.8 C926.1 642.3 926.2 641.8 926.4 641.3 C926.5 640.8 926.7 640.3 927.0 639.8 C927.2 639.3 927.5 638.8 927.8 638.3 C928.1 637.8 928.5 637.3 928.9 636.9 C929.3 636.4 929.8 635.9 930.3 635.4 C930.8 635.0 931.3 634.5 931.9 634.1 C932.5 633.6 933.1 633.2 933.7 632.8 C934.3 632.4 935.0 632.0 935.6 631.6 C936.3 631.2 937.0 630.9 937.7 630.6 C938.4 630.2 939.2 629.9 939.9 629.7 C940.7 629.4 941.4 629.2 942.2 629.0 C942.9 628.7 943.7 628.6 944.4 628.4 C945.2 628.3 946.0 628.1 946.7 628.0 C947.4 628.0 948.2 627.9 948.9 627.9 C949.6 627.8 950.3 627.9 951.0 627.9 C951.7 627.9 952.3 628.0 953.0 628.1 C953.6 628.2 954.2 628.4 954.8 628.5 C955.3 628.7 955.9 628.9 956.4 629.1 C956.9 629.3 957.4 629.6 957.8 629.9 C958.2 630.2 958.6 630.5 958.9 630.8 C959.3 631.1 959.6 631.5 959.8 631.9 C960.1 632.3 960.3 632.7 960.4 633.1Z" stroke="#e77a36" stroke-width="1.35"/><path d="M962.7 632.7 C962.9 633.2 963.0 633.7 963.1 634.2 C963.1 634.7 963.2 635.2 963.1 635.8 C963.0 636.3 962.9 636.9 962.8 637.5 C962.6 638.0 962.4 638.6 962.1 639.2 C961.8 639.7 961.5 640.3 961.1 640.9 C960.7 641.5 960.3 642.0 959.8 642.6 C959.3 643.1 958.8 643.7 958.2 644.2 C957.6 644.8 957.0 645.3 956.3 645.8 C955.7 646.3 955.0 646.8 954.3 647.3 C953.5 647.8 952.8 648.2 952.0 648.7 C951.2 649.1 950.4 649.5 949.6 649.9 C948.7 650.2 947.9 650.6 947.0 650.9 C946.2 651.2 945.3 651.5 944.4 651.7 C943.5 652.0 942.6 652.2 941.8 652.4 C940.9 652.6 940.0 652.7 939.2 652.8 C938.3 652.9 937.4 653.0 936.6 653.0 C935.8 653.0 935.0 653.0 934.2 653.0 C933.4 652.9 932.6 652.9 931.9 652.7 C931.2 652.6 930.4 652.5 929.8 652.3 C929.1 652.1 928.5 651.9 927.9 651.6 C927.3 651.3 926.8 651.0 926.3 650.7 C925.8 650.4 925.4 650.0 925.0 649.7 C924.6 649.3 924.2 648.9 924.0 648.4 C923.7 648.0 923.4 647.5 923.3 647.0 C923.1 646.6 923.0 646.1 922.9 645.5 C922.9 645.0 922.8 644.5 922.9 644.0 C923.0 643.4 923.1 642.8 923.2 642.3 C923.4 641.7 923.6 641.1 923.9 640.6 C924.2 640.0 924.5 639.4 924.9 638.9 C925.3 638.3 925.7 637.7 926.2 637.1 C926.7 636.6 927.2 636.0 927.8 635.5 C928.4 635.0 929.0 634.4 929.7 633.9 C930.3 633.4 931.0 632.9 931.7 632.4 C932.5 632.0 933.2 631.5 934.0 631.1 C934.8 630.6 935.6 630.2 936.4 629.9 C937.3 629.5 938.1 629.2 939.0 628.8 C939.8 628.5 940.7 628.2 941.6 628.0 C942.5 627.8 943.4 627.5 944.2 627.4 C945.1 627.2 946.0 627.0 946.8 626.9 C947.7 626.8 948.6 626.8 949.4 626.7 C950.2 626.7 951.0 626.7 951.8 626.7 C952.6 626.8 953.4 626.9 954.1 627.0 C954.8 627.1 955.6 627.3 956.2 627.5 C956.9 627.6 957.5 627.9 958.1 628.1 C958.7 628.4 959.2 628.7 959.7 629.0 C960.2 629.3 960.6 629.7 961.0 630.1 C961.4 630.5 961.8 630.9 962.0 631.3 C962.3 631.7 962.6 632.2 962.7 632.7Z" stroke="#e57c3c" stroke-width="1.35"/><path d="M965.1 632.3 C965.3 632.8 965.4 633.4 965.5 634.0 C965.5 634.6 965.5 635.2 965.5 635.8 C965.4 636.4 965.3 637.0 965.1 637.7 C964.9 638.3 964.6 639.0 964.3 639.6 C964.0 640.3 963.6 640.9 963.2 641.6 C962.7 642.2 962.2 642.8 961.7 643.5 C961.1 644.1 960.5 644.8 959.9 645.4 C959.2 646.0 958.5 646.6 957.7 647.2 C957.0 647.7 956.2 648.3 955.4 648.8 C954.5 649.4 953.7 649.9 952.8 650.4 C951.9 650.9 951.0 651.3 950.0 651.7 C949.1 652.2 948.1 652.6 947.1 652.9 C946.1 653.3 945.1 653.6 944.1 653.9 C943.1 654.2 942.1 654.4 941.1 654.6 C940.2 654.8 939.2 655.0 938.2 655.1 C937.2 655.2 936.2 655.3 935.3 655.3 C934.3 655.4 933.4 655.4 932.5 655.3 C931.6 655.3 930.7 655.2 929.9 655.1 C929.1 654.9 928.3 654.7 927.5 654.5 C926.8 654.3 926.0 654.1 925.4 653.8 C924.7 653.5 924.1 653.1 923.6 652.8 C923.0 652.4 922.5 652.0 922.0 651.6 C921.6 651.2 921.2 650.7 920.9 650.2 C920.6 649.7 920.3 649.2 920.1 648.6 C919.9 648.1 919.8 647.5 919.7 646.9 C919.6 646.4 919.6 645.8 919.7 645.1 C919.8 644.5 919.9 643.9 920.1 643.3 C920.3 642.6 920.5 642.0 920.9 641.3 C921.2 640.7 921.6 640.0 922.0 639.4 C922.4 638.7 922.9 638.1 923.5 637.4 C924.0 636.8 924.6 636.2 925.3 635.6 C926.0 634.9 926.7 634.3 927.4 633.8 C928.2 633.2 929.0 632.6 929.8 632.1 C930.6 631.5 931.5 631.0 932.4 630.5 C933.3 630.1 934.2 629.6 935.2 629.2 C936.1 628.8 937.1 628.4 938.0 628.0 C939.0 627.6 940.0 627.3 941.0 627.0 C942.0 626.8 943.0 626.5 944.0 626.3 C945.0 626.1 946.0 625.9 947.0 625.8 C948.0 625.7 948.9 625.6 949.9 625.6 C950.8 625.5 951.8 625.6 952.7 625.6 C953.6 625.6 954.4 625.7 955.3 625.9 C956.1 626.0 956.9 626.2 957.7 626.4 C958.4 626.6 959.1 626.9 959.8 627.1 C960.4 627.4 961.1 627.8 961.6 628.1 C962.2 628.5 962.7 628.9 963.1 629.3 C963.6 629.8 964.0 630.2 964.3 630.7 C964.6 631.2 964.9 631.7 965.1 632.3Z" stroke="#e37e41" stroke-width="1.35"/><path d="M967.4 631.9 C967.6 632.5 967.8 633.1 967.8 633.8 C967.9 634.4 967.9 635.1 967.8 635.8 C967.8 636.5 967.6 637.2 967.4 637.9 C967.2 638.6 966.9 639.3 966.5 640.1 C966.2 640.8 965.7 641.5 965.2 642.2 C964.8 643.0 964.2 643.7 963.6 644.4 C963.0 645.1 962.3 645.8 961.5 646.5 C960.8 647.2 960.0 647.8 959.2 648.5 C958.3 649.1 957.4 649.8 956.5 650.4 C955.6 651.0 954.6 651.6 953.6 652.1 C952.6 652.6 951.5 653.2 950.5 653.6 C949.4 654.1 948.3 654.5 947.2 654.9 C946.1 655.3 945.0 655.7 943.9 656.0 C942.8 656.3 941.6 656.6 940.5 656.8 C939.4 657.1 938.3 657.3 937.2 657.4 C936.1 657.5 935.0 657.6 933.9 657.7 C932.9 657.7 931.8 657.7 930.8 657.7 C929.8 657.6 928.8 657.5 927.9 657.4 C927.0 657.2 926.1 657.0 925.2 656.8 C924.4 656.6 923.6 656.3 922.9 655.9 C922.1 655.6 921.4 655.3 920.8 654.8 C920.2 654.4 919.6 654.0 919.1 653.5 C918.6 653.0 918.2 652.5 917.8 652.0 C917.5 651.4 917.2 650.8 917.0 650.2 C916.7 649.6 916.6 649.0 916.5 648.3 C916.4 647.7 916.4 647.0 916.5 646.3 C916.6 645.6 916.7 644.9 916.9 644.2 C917.2 643.5 917.4 642.8 917.8 642.1 C918.2 641.3 918.6 640.6 919.1 639.9 C919.6 639.2 920.1 638.4 920.8 637.7 C921.4 637.0 922.1 636.3 922.8 635.6 C923.5 634.9 924.3 634.3 925.2 633.6 C926.0 633.0 926.9 632.3 927.8 631.7 C928.8 631.1 929.8 630.6 930.8 630.0 C931.8 629.5 932.8 629.0 933.9 628.5 C934.9 628.0 936.0 627.6 937.1 627.2 C938.2 626.8 939.3 626.4 940.4 626.1 C941.6 625.8 942.7 625.5 943.8 625.3 C944.9 625.0 946.0 624.9 947.1 624.7 C948.2 624.6 949.3 624.5 950.4 624.4 C951.5 624.4 952.5 624.4 953.5 624.5 C954.5 624.5 955.5 624.6 956.4 624.7 C957.4 624.9 958.3 625.1 959.1 625.3 C959.9 625.6 960.7 625.8 961.5 626.2 C962.2 626.5 962.9 626.9 963.5 627.3 C964.2 627.7 964.7 628.1 965.2 628.6 C965.7 629.1 966.1 629.6 966.5 630.1 C966.9 630.7 967.2 631.3 967.4 631.9Z" stroke="#e18146" stroke-width="1.35"/><path d="M969.7 631.5 C969.9 632.1 970.1 632.8 970.2 633.6 C970.3 634.3 970.3 635.0 970.2 635.8 C970.1 636.5 970.0 637.3 969.7 638.1 C969.5 638.9 969.1 639.7 968.7 640.5 C968.3 641.3 967.9 642.1 967.3 642.9 C966.8 643.7 966.1 644.5 965.5 645.3 C964.8 646.1 964.0 646.9 963.2 647.6 C962.4 648.4 961.5 649.1 960.6 649.8 C959.6 650.5 958.6 651.2 957.6 651.9 C956.6 652.6 955.5 653.2 954.4 653.8 C953.3 654.4 952.1 655.0 950.9 655.5 C949.8 656.0 948.5 656.5 947.3 657.0 C946.1 657.4 944.9 657.8 943.6 658.2 C942.4 658.5 941.1 658.8 939.9 659.1 C938.7 659.3 937.4 659.5 936.2 659.7 C935.0 659.8 933.8 660.0 932.6 660.0 C931.4 660.1 930.3 660.1 929.2 660.0 C928.0 659.9 927.0 659.8 925.9 659.7 C924.9 659.5 923.9 659.3 923.0 659.0 C922.0 658.8 921.1 658.5 920.3 658.1 C919.5 657.8 918.7 657.4 918.1 656.9 C917.4 656.5 916.7 656.0 916.2 655.4 C915.6 654.9 915.2 654.3 914.8 653.7 C914.4 653.1 914.0 652.5 913.8 651.8 C913.6 651.2 913.4 650.5 913.3 649.7 C913.2 649.0 913.2 648.3 913.3 647.5 C913.4 646.8 913.5 646.0 913.8 645.2 C914.0 644.4 914.4 643.6 914.8 642.8 C915.2 642.0 915.6 641.2 916.2 640.4 C916.7 639.6 917.4 638.8 918.0 638.0 C918.7 637.2 919.5 636.4 920.3 635.7 C921.1 634.9 922.0 634.2 922.9 633.5 C923.9 632.8 924.9 632.1 925.9 631.4 C926.9 630.7 928.0 630.1 929.1 629.5 C930.2 628.9 931.4 628.3 932.6 627.8 C933.7 627.3 935.0 626.8 936.2 626.3 C937.4 625.9 938.6 625.5 939.9 625.1 C941.1 624.8 942.4 624.5 943.6 624.2 C944.8 624.0 946.1 623.8 947.3 623.6 C948.5 623.5 949.7 623.3 950.9 623.3 C952.1 623.2 953.2 623.2 954.3 623.3 C955.5 623.4 956.5 623.5 957.6 623.6 C958.6 623.8 959.6 624.0 960.5 624.3 C961.5 624.5 962.4 624.8 963.2 625.2 C964.0 625.5 964.8 625.9 965.4 626.4 C966.1 626.8 966.8 627.3 967.3 627.9 C967.9 628.4 968.3 629.0 968.7 629.6 C969.1 630.2 969.5 630.8 969.7 631.5Z" stroke="#df834c" stroke-width="1.35"/><path d="M972.0 631.1 C972.3 631.8 972.5 632.6 972.6 633.4 C972.7 634.1 972.7 635.0 972.6 635.8 C972.5 636.6 972.3 637.5 972.0 638.3 C971.8 639.2 971.4 640.1 971.0 640.9 C970.5 641.8 970.0 642.7 969.4 643.6 C968.8 644.4 968.1 645.3 967.3 646.2 C966.6 647.0 965.8 647.9 964.9 648.7 C964.0 649.6 963.0 650.4 962.0 651.2 C960.9 651.9 959.8 652.7 958.7 653.4 C957.6 654.2 956.4 654.9 955.2 655.5 C953.9 656.2 952.7 656.8 951.4 657.4 C950.1 658.0 948.8 658.5 947.4 659.0 C946.1 659.5 944.7 659.9 943.4 660.3 C942.0 660.7 940.6 661.0 939.3 661.3 C937.9 661.6 936.6 661.8 935.2 662.0 C933.9 662.2 932.6 662.3 931.3 662.3 C930.0 662.4 928.7 662.4 927.5 662.3 C926.3 662.3 925.1 662.2 923.9 662.0 C922.8 661.8 921.7 661.6 920.7 661.3 C919.7 661.0 918.7 660.7 917.8 660.3 C916.9 659.9 916.1 659.5 915.3 659.0 C914.5 658.5 913.9 657.9 913.3 657.4 C912.7 656.8 912.1 656.2 911.7 655.5 C911.3 654.8 910.9 654.1 910.6 653.4 C910.4 652.7 910.2 651.9 910.1 651.1 C910.0 650.3 910.0 649.5 910.1 648.7 C910.2 647.9 910.4 647.0 910.6 646.2 C910.9 645.3 911.3 644.4 911.7 643.5 C912.1 642.7 912.7 641.8 913.3 640.9 C913.9 640.0 914.6 639.2 915.3 638.3 C916.1 637.4 916.9 636.6 917.8 635.8 C918.7 634.9 919.7 634.1 920.7 633.3 C921.7 632.5 922.8 631.8 924.0 631.0 C925.1 630.3 926.3 629.6 927.5 629.0 C928.7 628.3 930.0 627.7 931.3 627.1 C932.6 626.5 933.9 626.0 935.2 625.5 C936.6 625.0 937.9 624.6 939.3 624.2 C940.7 623.8 942.0 623.5 943.4 623.2 C944.7 622.9 946.1 622.7 947.4 622.5 C948.8 622.3 950.1 622.2 951.4 622.2 C952.7 622.1 954.0 622.1 955.2 622.2 C956.4 622.2 957.6 622.3 958.7 622.5 C959.9 622.7 961.0 622.9 962.0 623.2 C963.0 623.5 964.0 623.8 964.9 624.2 C965.8 624.6 966.6 625.0 967.4 625.5 C968.1 626.0 968.8 626.5 969.4 627.1 C970.0 627.7 970.5 628.3 971.0 629.0 C971.4 629.6 971.8 630.3 972.0 631.1Z" stroke="#dd8651" stroke-width="1.35"/><path d="M974.4 630.7 C974.6 631.5 974.8 632.3 974.9 633.1 C975.0 634.0 975.0 634.9 974.9 635.8 C974.8 636.7 974.6 637.6 974.3 638.6 C974.0 639.5 973.7 640.4 973.2 641.4 C972.7 642.3 972.1 643.3 971.5 644.2 C970.8 645.2 970.1 646.2 969.2 647.1 C968.4 648.0 967.5 649.0 966.5 649.9 C965.5 650.8 964.5 651.6 963.4 652.5 C962.2 653.4 961.1 654.2 959.8 655.0 C958.6 655.8 957.3 656.5 956.0 657.2 C954.6 658.0 953.2 658.6 951.8 659.3 C950.4 659.9 949.0 660.5 947.5 661.0 C946.1 661.5 944.6 662.0 943.1 662.4 C941.6 662.9 940.1 663.2 938.7 663.5 C937.2 663.9 935.7 664.1 934.2 664.3 C932.8 664.5 931.3 664.6 929.9 664.7 C928.5 664.7 927.1 664.7 925.8 664.7 C924.5 664.6 923.2 664.5 922.0 664.3 C920.7 664.1 919.5 663.9 918.4 663.6 C917.3 663.3 916.2 662.9 915.3 662.5 C914.3 662.0 913.4 661.6 912.6 661.0 C911.7 660.5 911.0 659.9 910.3 659.3 C909.7 658.7 909.1 658.0 908.6 657.3 C908.2 656.6 907.8 655.8 907.5 655.0 C907.2 654.2 907.0 653.4 906.9 652.5 C906.8 651.7 906.8 650.8 906.9 649.9 C907.0 649.0 907.2 648.1 907.5 647.1 C907.8 646.2 908.2 645.2 908.7 644.3 C909.1 643.3 909.7 642.4 910.4 641.4 C911.0 640.5 911.8 639.5 912.6 638.6 C913.4 637.7 914.3 636.7 915.3 635.8 C916.3 634.9 917.4 634.0 918.5 633.2 C919.6 632.3 920.8 631.5 922.0 630.7 C923.2 629.9 924.5 629.1 925.9 628.4 C927.2 627.7 928.6 627.0 930.0 626.4 C931.4 625.8 932.8 625.2 934.3 624.7 C935.8 624.1 937.2 623.6 938.7 623.2 C940.2 622.8 941.7 622.4 943.2 622.1 C944.7 621.8 946.1 621.6 947.6 621.4 C949.1 621.2 950.5 621.1 951.9 621.0 C953.3 620.9 954.7 620.9 956.0 621.0 C957.4 621.1 958.6 621.2 959.9 621.4 C961.1 621.6 962.3 621.8 963.4 622.1 C964.5 622.4 965.6 622.8 966.6 623.2 C967.5 623.6 968.5 624.1 969.3 624.6 C970.1 625.2 970.8 625.8 971.5 626.4 C972.2 627.0 972.7 627.7 973.2 628.4 C973.7 629.1 974.1 629.9 974.4 630.7Z" stroke="#da8858" stroke-width="1.35"/><path d="M976.7 630.3 C977.0 631.1 977.2 632.0 977.3 632.9 C977.4 633.9 977.4 634.8 977.3 635.8 C977.2 636.8 977.0 637.8 976.7 638.8 C976.3 639.8 975.9 640.8 975.4 641.8 C974.9 642.9 974.3 643.9 973.5 644.9 C972.8 645.9 972.0 647.0 971.1 648.0 C970.2 649.0 969.2 650.0 968.2 651.0 C967.1 651.9 966.0 652.9 964.8 653.8 C963.6 654.8 962.3 655.7 960.9 656.5 C959.6 657.4 958.2 658.2 956.8 659.0 C955.3 659.7 953.8 660.5 952.3 661.2 C950.8 661.8 949.2 662.5 947.6 663.0 C946.1 663.6 944.5 664.1 942.9 664.6 C941.3 665.0 939.6 665.4 938.0 665.8 C936.4 666.1 934.8 666.4 933.2 666.6 C931.7 666.8 930.1 666.9 928.6 667.0 C927.1 667.1 925.6 667.1 924.1 667.0 C922.7 666.9 921.3 666.8 920.0 666.6 C918.6 666.4 917.3 666.1 916.1 665.8 C914.9 665.5 913.8 665.1 912.7 664.6 C911.7 664.2 910.7 663.7 909.8 663.1 C908.9 662.5 908.1 661.9 907.4 661.2 C906.7 660.6 906.1 659.8 905.6 659.0 C905.0 658.3 904.6 657.5 904.3 656.6 C904.0 655.7 903.8 654.8 903.7 653.9 C903.6 653.0 903.6 652.0 903.7 651.1 C903.8 650.1 904.0 649.1 904.3 648.1 C904.7 647.1 905.1 646.1 905.6 645.0 C906.1 644.0 906.7 643.0 907.5 641.9 C908.2 640.9 909.0 639.9 909.9 638.9 C910.8 637.9 911.8 636.9 912.8 635.9 C913.9 634.9 915.0 634.0 916.2 633.0 C917.4 632.1 918.7 631.2 920.1 630.4 C921.4 629.5 922.8 628.7 924.2 627.9 C925.7 627.1 927.2 626.4 928.7 625.7 C930.2 625.0 931.8 624.4 933.4 623.8 C934.9 623.3 936.5 622.7 938.1 622.3 C939.7 621.8 941.4 621.4 943.0 621.1 C944.6 620.8 946.2 620.5 947.8 620.3 C949.3 620.1 950.9 619.9 952.4 619.9 C953.9 619.8 955.4 619.8 956.9 619.9 C958.3 619.9 959.7 620.1 961.0 620.3 C962.4 620.5 963.7 620.7 964.9 621.0 C966.1 621.4 967.2 621.8 968.3 622.2 C969.3 622.7 970.3 623.2 971.2 623.8 C972.1 624.3 972.9 625.0 973.6 625.6 C974.3 626.3 974.9 627.0 975.4 627.8 C976.0 628.6 976.4 629.4 976.7 630.3Z" stroke="#d08c64" stroke-width="1.35"/><path d="M979.0 629.9 C979.3 630.8 979.6 631.7 979.7 632.7 C979.8 633.7 979.8 634.7 979.7 635.8 C979.5 636.8 979.3 637.9 979.0 639.0 C978.6 640.1 978.2 641.2 977.6 642.3 C977.1 643.4 976.4 644.5 975.6 645.6 C974.9 646.7 974.0 647.8 973.0 648.9 C972.1 650.0 971.0 651.0 969.9 652.1 C968.7 653.1 967.5 654.2 966.2 655.2 C964.9 656.2 963.5 657.1 962.1 658.0 C960.6 659.0 959.1 659.9 957.6 660.7 C956.0 661.5 954.4 662.3 952.8 663.0 C951.1 663.8 949.4 664.5 947.7 665.1 C946.0 665.7 944.3 666.2 942.6 666.7 C940.9 667.2 939.1 667.7 937.4 668.0 C935.7 668.4 934.0 668.7 932.3 668.9 C930.6 669.1 928.9 669.3 927.3 669.3 C925.6 669.4 924.0 669.4 922.5 669.3 C920.9 669.3 919.4 669.1 918.0 668.9 C916.5 668.7 915.2 668.4 913.9 668.1 C912.6 667.7 911.3 667.3 910.2 666.8 C909.1 666.3 908.0 665.8 907.1 665.2 C906.1 664.6 905.2 663.9 904.5 663.2 C903.7 662.4 903.0 661.6 902.5 660.8 C901.9 660.0 901.5 659.1 901.2 658.2 C900.8 657.3 900.6 656.3 900.5 655.3 C900.4 654.3 900.4 653.3 900.5 652.3 C900.6 651.2 900.9 650.1 901.2 649.1 C901.5 648.0 902.0 646.9 902.5 645.8 C903.1 644.7 903.8 643.6 904.5 642.5 C905.3 641.4 906.2 640.3 907.1 639.2 C908.1 638.1 909.2 637.0 910.3 636.0 C911.5 634.9 912.7 633.9 914.0 632.9 C915.3 631.9 916.7 630.9 918.1 630.0 C919.6 629.1 921.1 628.2 922.6 627.4 C924.2 626.5 925.8 625.7 927.4 625.0 C929.0 624.3 930.7 623.6 932.4 623.0 C934.1 622.4 935.8 621.8 937.6 621.3 C939.3 620.8 941.0 620.4 942.8 620.0 C944.5 619.7 946.2 619.4 947.9 619.2 C949.6 619.0 951.3 618.8 952.9 618.7 C954.5 618.6 956.2 618.6 957.7 618.7 C959.2 618.8 960.8 618.9 962.2 619.1 C963.6 619.3 965.0 619.6 966.3 620.0 C967.6 620.3 968.8 620.8 970.0 621.2 C971.1 621.7 972.2 622.3 973.1 622.9 C974.1 623.5 974.9 624.2 975.7 624.9 C976.5 625.6 977.1 626.4 977.7 627.2 C978.2 628.1 978.7 628.9 979.0 629.9Z" stroke="#c68f71" stroke-width="1.35"/><path d="M981.3 629.5 C981.7 630.4 981.9 631.5 982.0 632.5 C982.2 633.6 982.1 634.7 982.0 635.8 C981.9 636.9 981.6 638.1 981.3 639.2 C980.9 640.4 980.4 641.5 979.8 642.7 C979.2 643.9 978.5 645.1 977.7 646.3 C976.9 647.4 975.9 648.6 974.9 649.8 C973.9 650.9 972.7 652.1 971.5 653.2 C970.3 654.3 969.0 655.4 967.6 656.5 C966.2 657.6 964.7 658.6 963.2 659.6 C961.6 660.6 960.0 661.5 958.3 662.4 C956.7 663.3 955.0 664.1 953.2 664.9 C951.5 665.7 949.7 666.4 947.8 667.1 C946.0 667.8 944.2 668.4 942.3 668.9 C940.5 669.4 938.6 669.9 936.8 670.3 C934.9 670.6 933.1 670.9 931.3 671.2 C929.5 671.4 927.7 671.6 925.9 671.7 C924.2 671.7 922.4 671.8 920.8 671.7 C919.1 671.6 917.5 671.5 916.0 671.2 C914.5 671.0 913.0 670.7 911.6 670.3 C910.2 670.0 908.9 669.5 907.7 669.0 C906.5 668.5 905.3 667.9 904.3 667.2 C903.3 666.6 902.4 665.9 901.5 665.1 C900.7 664.3 900.0 663.5 899.4 662.6 C898.8 661.7 898.4 660.8 898.0 659.8 C897.7 658.8 897.4 657.8 897.3 656.7 C897.2 655.7 897.2 654.6 897.3 653.5 C897.4 652.3 897.7 651.2 898.0 650.0 C898.4 648.9 898.9 647.7 899.5 646.5 C900.1 645.3 900.8 644.2 901.6 643.0 C902.5 641.8 903.4 640.6 904.4 639.5 C905.5 638.3 906.6 637.1 907.8 636.0 C909.0 634.9 910.4 633.8 911.8 632.7 C913.1 631.7 914.6 630.6 916.2 629.7 C917.7 628.7 919.3 627.7 921.0 626.8 C922.6 626.0 924.4 625.1 926.1 624.3 C927.9 623.5 929.7 622.8 931.5 622.2 C933.3 621.5 935.2 620.9 937.0 620.4 C938.8 619.8 940.7 619.4 942.5 619.0 C944.4 618.6 946.2 618.3 948.1 618.1 C949.9 617.8 951.7 617.7 953.4 617.6 C955.2 617.5 956.9 617.5 958.5 617.6 C960.2 617.6 961.8 617.8 963.3 618.0 C964.9 618.2 966.4 618.5 967.7 618.9 C969.1 619.3 970.4 619.7 971.7 620.3 C972.9 620.8 974.0 621.4 975.0 622.0 C976.0 622.7 977.0 623.4 977.8 624.2 C978.6 624.9 979.3 625.8 979.9 626.7 C980.5 627.5 981.0 628.5 981.3 629.5Z" stroke="#bc927d" stroke-width="1.35"/><path d="M983.7 629.1 C984.0 630.1 984.3 631.2 984.4 632.3 C984.5 633.4 984.5 634.6 984.4 635.8 C984.3 637.0 984.0 638.2 983.6 639.4 C983.2 640.7 982.7 641.9 982.1 643.2 C981.4 644.4 980.6 645.7 979.8 646.9 C978.9 648.2 977.9 649.5 976.8 650.7 C975.7 651.9 974.5 653.1 973.2 654.3 C971.9 655.5 970.5 656.7 969.0 657.8 C967.5 659.0 965.9 660.1 964.3 661.1 C962.6 662.2 960.9 663.2 959.1 664.1 C957.4 665.1 955.5 666.0 953.7 666.8 C951.8 667.6 949.9 668.4 947.9 669.1 C946.0 669.8 944.0 670.5 942.1 671.0 C940.1 671.6 938.1 672.1 936.2 672.5 C934.2 672.9 932.2 673.2 930.3 673.5 C928.4 673.7 926.4 673.9 924.6 674.0 C922.7 674.1 920.9 674.1 919.1 674.0 C917.4 673.9 915.6 673.8 914.0 673.5 C912.4 673.3 910.8 673.0 909.3 672.6 C907.8 672.2 906.4 671.7 905.1 671.2 C903.9 670.6 902.6 670.0 901.6 669.3 C900.5 668.6 899.5 667.8 898.6 667.0 C897.7 666.2 897.0 665.3 896.4 664.4 C895.7 663.4 895.2 662.4 894.8 661.4 C894.5 660.3 894.2 659.2 894.1 658.1 C894.0 657.0 894.0 655.8 894.1 654.6 C894.2 653.5 894.5 652.2 894.9 651.0 C895.3 649.8 895.8 648.5 896.4 647.3 C897.1 646.0 897.9 644.7 898.7 643.5 C899.6 642.2 900.6 641.0 901.7 639.7 C902.8 638.5 904.0 637.3 905.3 636.1 C906.6 634.9 908.0 633.7 909.5 632.6 C911.0 631.5 912.6 630.4 914.2 629.3 C915.9 628.3 917.6 627.3 919.4 626.3 C921.1 625.4 923.0 624.5 924.8 623.6 C926.7 622.8 928.6 622.0 930.6 621.3 C932.5 620.6 934.5 620.0 936.4 619.4 C938.4 618.9 940.4 618.4 942.3 617.9 C944.3 617.5 946.3 617.2 948.2 617.0 C950.1 616.7 952.1 616.5 953.9 616.4 C955.8 616.3 957.6 616.3 959.4 616.4 C961.1 616.5 962.9 616.7 964.5 616.9 C966.1 617.1 967.7 617.4 969.2 617.8 C970.7 618.2 972.1 618.7 973.4 619.3 C974.6 619.8 975.9 620.4 976.9 621.1 C978.0 621.8 979.0 622.6 979.9 623.4 C980.8 624.2 981.5 625.1 982.1 626.1 C982.8 627.0 983.3 628.0 983.7 629.1Z" stroke="#b39689" stroke-width="1.35"/><path d="M986.0 628.7 C986.4 629.8 986.6 630.9 986.8 632.1 C986.9 633.3 986.9 634.5 986.8 635.8 C986.6 637.1 986.3 638.3 985.9 639.7 C985.5 641.0 984.9 642.3 984.3 643.6 C983.6 644.9 982.8 646.3 981.8 647.6 C980.9 648.9 979.9 650.3 978.7 651.6 C977.5 652.9 976.2 654.2 974.8 655.5 C973.5 656.7 972.0 658.0 970.4 659.2 C968.8 660.4 967.1 661.5 965.4 662.6 C963.6 663.8 961.8 664.8 959.9 665.8 C958.1 666.8 956.1 667.8 954.1 668.7 C952.1 669.6 950.1 670.4 948.1 671.1 C946.0 671.9 943.9 672.6 941.8 673.2 C939.7 673.8 937.6 674.3 935.5 674.7 C933.5 675.2 931.4 675.5 929.3 675.8 C927.3 676.0 925.2 676.2 923.2 676.3 C921.3 676.4 919.3 676.4 917.4 676.4 C915.6 676.3 913.8 676.1 912.0 675.9 C910.3 675.6 908.6 675.3 907.0 674.8 C905.5 674.4 904.0 673.9 902.6 673.3 C901.2 672.8 900.0 672.1 898.8 671.4 C897.7 670.6 896.6 669.8 895.7 668.9 C894.8 668.1 894.0 667.1 893.3 666.1 C892.6 665.1 892.1 664.1 891.7 663.0 C891.3 661.9 891.0 660.7 890.9 659.5 C890.8 658.3 890.8 657.1 890.9 655.8 C891.1 654.6 891.3 653.3 891.8 652.0 C892.2 650.7 892.7 649.3 893.4 648.0 C894.1 646.7 894.9 645.3 895.8 644.0 C896.8 642.7 897.8 641.3 899.0 640.0 C900.1 638.7 901.4 637.4 902.8 636.2 C904.2 634.9 905.7 633.7 907.3 632.5 C908.9 631.3 910.5 630.1 912.3 629.0 C914.0 627.9 915.8 626.8 917.7 625.8 C919.6 624.8 921.6 623.8 923.5 622.9 C925.5 622.1 927.6 621.2 929.6 620.5 C931.7 619.7 933.8 619.1 935.8 618.5 C937.9 617.9 940.0 617.3 942.1 616.9 C944.2 616.5 946.3 616.1 948.4 615.8 C950.4 615.6 952.4 615.4 954.4 615.3 C956.4 615.2 958.3 615.2 960.2 615.3 C962.1 615.3 963.9 615.5 965.6 615.8 C967.4 616.0 969.1 616.4 970.6 616.8 C972.2 617.2 973.7 617.7 975.0 618.3 C976.4 618.9 977.7 619.5 978.9 620.3 C980.0 621.0 981.1 621.8 982.0 622.7 C982.9 623.6 983.7 624.5 984.4 625.5 C985.0 626.5 985.6 627.6 986.0 628.7Z" stroke="#a99996" stroke-width="1.35"/><path d="M988.3 628.2 C988.7 629.4 989.0 630.6 989.1 631.9 C989.3 633.2 989.3 634.5 989.1 635.8 C989.0 637.1 988.7 638.5 988.2 639.9 C987.8 641.3 987.2 642.7 986.5 644.1 C985.8 645.5 984.9 646.9 983.9 648.3 C982.9 649.7 981.8 651.1 980.6 652.5 C979.3 653.9 978.0 655.2 976.5 656.6 C975.0 657.9 973.5 659.2 971.8 660.5 C970.1 661.8 968.3 663.0 966.5 664.2 C964.7 665.4 962.7 666.5 960.7 667.6 C958.7 668.6 956.7 669.6 954.6 670.6 C952.5 671.5 950.3 672.4 948.2 673.2 C946.0 674.0 943.8 674.7 941.6 675.3 C939.4 675.9 937.1 676.5 934.9 677.0 C932.7 677.4 930.5 677.8 928.3 678.1 C926.2 678.4 924.0 678.6 921.9 678.7 C919.8 678.8 917.8 678.8 915.8 678.7 C913.8 678.6 911.9 678.4 910.0 678.2 C908.2 677.9 906.4 677.5 904.8 677.1 C903.1 676.7 901.5 676.1 900.1 675.5 C898.6 674.9 897.3 674.2 896.1 673.4 C894.8 672.6 893.7 671.8 892.8 670.9 C891.8 669.9 890.9 668.9 890.2 667.9 C889.5 666.8 889.0 665.7 888.5 664.6 C888.1 663.4 887.8 662.2 887.7 660.9 C887.6 659.7 887.6 658.3 887.7 657.0 C887.9 655.7 888.2 654.3 888.6 652.9 C889.0 651.6 889.6 650.2 890.3 648.7 C891.1 647.3 891.9 645.9 892.9 644.5 C893.9 643.1 895.0 641.7 896.3 640.3 C897.5 638.9 898.9 637.6 900.3 636.2 C901.8 634.9 903.4 633.6 905.0 632.3 C906.7 631.0 908.5 629.8 910.3 628.6 C912.2 627.5 914.1 626.3 916.1 625.3 C918.1 624.2 920.2 623.2 922.2 622.2 C924.3 621.3 926.5 620.4 928.7 619.6 C930.8 618.9 933.1 618.1 935.3 617.5 C937.5 616.9 939.7 616.3 941.9 615.9 C944.1 615.4 946.3 615.0 948.5 614.7 C950.7 614.5 952.8 614.3 954.9 614.2 C957.0 614.1 959.1 614.0 961.1 614.1 C963.0 614.2 965.0 614.4 966.8 614.6 C968.6 614.9 970.4 615.3 972.1 615.7 C973.7 616.2 975.3 616.7 976.7 617.3 C978.2 617.9 979.6 618.6 980.8 619.4 C982.0 620.2 983.1 621.0 984.1 621.9 C985.0 622.9 985.9 623.9 986.6 624.9 C987.3 626.0 987.9 627.1 988.3 628.2Z" stroke="#9f9ca2" stroke-width="1.35"/><path d="M990.6 627.8 C991.1 629.1 991.4 630.4 991.5 631.7 C991.7 633.0 991.6 634.4 991.5 635.8 C991.3 637.2 991.0 638.6 990.5 640.1 C990.1 641.5 989.5 643.0 988.7 644.5 C987.9 646.0 987.0 647.5 986.0 649.0 C985.0 650.4 983.8 651.9 982.5 653.4 C981.2 654.8 979.7 656.3 978.2 657.7 C976.6 659.1 975.0 660.5 973.2 661.8 C971.4 663.2 969.6 664.5 967.6 665.7 C965.7 667.0 963.6 668.2 961.5 669.3 C959.4 670.4 957.3 671.5 955.0 672.4 C952.8 673.4 950.6 674.4 948.3 675.2 C946.0 676.0 943.6 676.8 941.3 677.4 C939.0 678.1 936.6 678.7 934.3 679.2 C932.0 679.7 929.6 680.1 927.3 680.4 C925.1 680.7 922.8 680.9 920.6 681.0 C918.4 681.1 916.2 681.1 914.1 681.0 C912.0 680.9 910.0 680.8 908.0 680.5 C906.1 680.2 904.2 679.8 902.5 679.4 C900.7 678.9 899.1 678.3 897.6 677.7 C896.0 677.0 894.6 676.3 893.3 675.5 C892.0 674.7 890.8 673.8 889.8 672.8 C888.8 671.8 887.9 670.8 887.2 669.7 C886.4 668.6 885.8 667.4 885.4 666.2 C884.9 664.9 884.6 663.6 884.5 662.3 C884.3 661.0 884.4 659.6 884.5 658.2 C884.7 656.8 885.0 655.4 885.5 653.9 C885.9 652.5 886.5 651.0 887.3 649.5 C888.1 648.0 889.0 646.5 890.0 645.0 C891.0 643.6 892.2 642.1 893.5 640.6 C894.8 639.2 896.3 637.7 897.8 636.3 C899.4 634.9 901.0 633.5 902.8 632.2 C904.6 630.8 906.4 629.5 908.4 628.3 C910.3 627.0 912.4 625.8 914.5 624.7 C916.6 623.6 918.7 622.5 921.0 621.6 C923.2 620.6 925.4 619.6 927.7 618.8 C930.0 618.0 932.4 617.2 934.7 616.6 C937.0 615.9 939.4 615.3 941.7 614.8 C944.0 614.3 946.4 613.9 948.7 613.6 C950.9 613.3 953.2 613.1 955.4 613.0 C957.6 612.9 959.8 612.9 961.9 613.0 C964.0 613.1 966.0 613.2 968.0 613.5 C969.9 613.8 971.8 614.2 973.5 614.6 C975.3 615.1 976.9 615.7 978.4 616.3 C980.0 617.0 981.4 617.7 982.7 618.5 C984.0 619.3 985.2 620.2 986.2 621.2 C987.2 622.2 988.1 623.2 988.8 624.3 C989.6 625.4 990.2 626.6 990.6 627.8Z" stroke="#96a0af" stroke-width="1.35"/></g>
<path d="M990.0 440.4 C991.7 440.4 995.6 440.1 1000.2 440.4 C1004.8 440.8 1012.7 440.9 1017.8 442.5 C1022.8 444.1 1027.4 447.5 1030.6 449.9 C1033.8 452.4 1034.9 454.9 1037.0 457.3 C1039.0 459.7 1040.6 461.8 1042.9 464.2 C1045.1 466.6 1047.8 469.6 1050.5 471.5 C1053.2 473.4 1055.7 474.0 1059.1 475.6 C1062.5 477.3 1067.2 479.5 1071.0 481.1 C1074.9 482.8 1078.4 484.0 1082.0 485.6 C1085.7 487.2 1091.2 489.8 1093.1 490.6" stroke="#33bff0" stroke-width="1.7"/>
<path d="M990.0 442.1 C991.7 442.1 995.5 441.8 1000.1 442.1 C1004.6 442.4 1012.4 442.6 1017.3 444.1 C1022.2 445.7 1026.5 448.9 1029.6 451.3 C1032.6 453.7 1033.7 456.1 1035.7 458.4 C1037.7 460.8 1039.3 463.0 1041.6 465.4 C1044.0 467.8 1046.7 470.9 1049.5 472.9 C1052.3 474.8 1054.9 475.6 1058.4 477.2 C1061.9 478.8 1066.5 481.0 1070.4 482.7 C1074.2 484.3 1077.7 485.6 1081.4 487.2 C1085.0 488.8 1090.5 491.3 1092.4 492.2" stroke="#2ec0f2" stroke-width="1.7"/>
<path d="M990.0 443.8 C991.7 443.8 995.5 443.5 999.9 443.8 C1004.4 444.1 1012.0 444.3 1016.8 445.8 C1021.5 447.2 1025.6 450.3 1028.5 452.6 C1031.4 454.9 1032.4 457.2 1034.4 459.5 C1036.4 461.8 1038.1 464.1 1040.4 466.6 C1042.8 469.0 1045.7 472.2 1048.5 474.3 C1051.4 476.3 1054.1 477.1 1057.7 478.7 C1061.2 480.4 1065.8 482.6 1069.7 484.2 C1073.5 485.9 1077.0 487.2 1080.7 488.7 C1084.3 490.3 1089.8 492.9 1091.7 493.7" stroke="#36b8e8" stroke-width="1.7"/>
<path d="M990.0 445.5 C991.6 445.5 995.4 445.2 999.8 445.5 C1004.2 445.8 1011.7 446.0 1016.3 447.4 C1020.9 448.8 1024.7 451.8 1027.5 454.0 C1030.3 456.2 1031.1 458.3 1033.1 460.6 C1035.1 462.9 1036.8 465.2 1039.2 467.7 C1041.6 470.2 1044.6 473.6 1047.6 475.6 C1050.5 477.7 1053.4 478.6 1056.9 480.3 C1060.5 482.0 1065.2 484.1 1069.0 485.8 C1072.8 487.5 1076.3 488.7 1080.0 490.3 C1083.7 491.9 1089.1 494.4 1091.0 495.3" stroke="#4cb0d8" stroke-width="1.7"/></g></svg>
</div>

<!-- status bar -->
<div class="a" style="left:0;top:1013px;width:1920px;height:19px;background:#f0f0f0"></div>
<div class="a" style="left:0;top:1012px;width:597px;height:1px;background:#696969"></div>
<div class="sb">
 <div class="a" style="left:0;top:1015px;width:100px;height:17px;border-top:1px solid #a0a0a0;border-left:1px solid #a0a0a0;border-right:1px solid #fff"></div><span style="left:5px;top:1017px">MapsID: 3859</span>
 <div class="a" style="left:102px;top:1015px;width:78px;height:17px;border-top:1px solid #a0a0a0;border-left:1px solid #a0a0a0;border-right:1px solid #fff"></div><span style="left:104px;top:1017px">png</span>
 <div class="a" style="left:182px;top:1015px;width:98px;height:17px;border-top:1px solid #a0a0a0;border-left:1px solid #a0a0a0;border-right:1px solid #fff"></div><span style="left:184px;top:1017px">MinZoom: 8</span>
 <div class="a" style="left:282px;top:1015px;width:98px;height:17px;border-top:1px solid #a0a0a0;border-left:1px solid #a0a0a0;border-right:1px solid #fff"></div><span style="left:284px;top:1017px">MaxZoom: 18</span>
 <div class="a" style="left:382px;top:1015px;width:98px;height:17px;border-top:1px solid #a0a0a0;border-left:1px solid #a0a0a0;border-right:1px solid #fff"></div><span style="left:384px;top:1017px">TileSize: 256</span>
 <div class="a" style="left:482px;top:1015px;width:98px;height:17px;border-top:1px solid #a0a0a0;border-left:1px solid #a0a0a0;border-right:1px solid #fff"></div><span style="left:484px;top:1017px">EPSG:3857</span>
 <div class="a" style="left:582px;top:1015px;width:1338px;height:17px;border-top:1px solid #a0a0a0;border-left:1px solid #a0a0a0"></div><span style="left:584px;top:1017px;font-size:13.12px">Longitude=10.338135, Latitude=46.532414, tile=8/135/90.png</span>
</div>
</body></html>
